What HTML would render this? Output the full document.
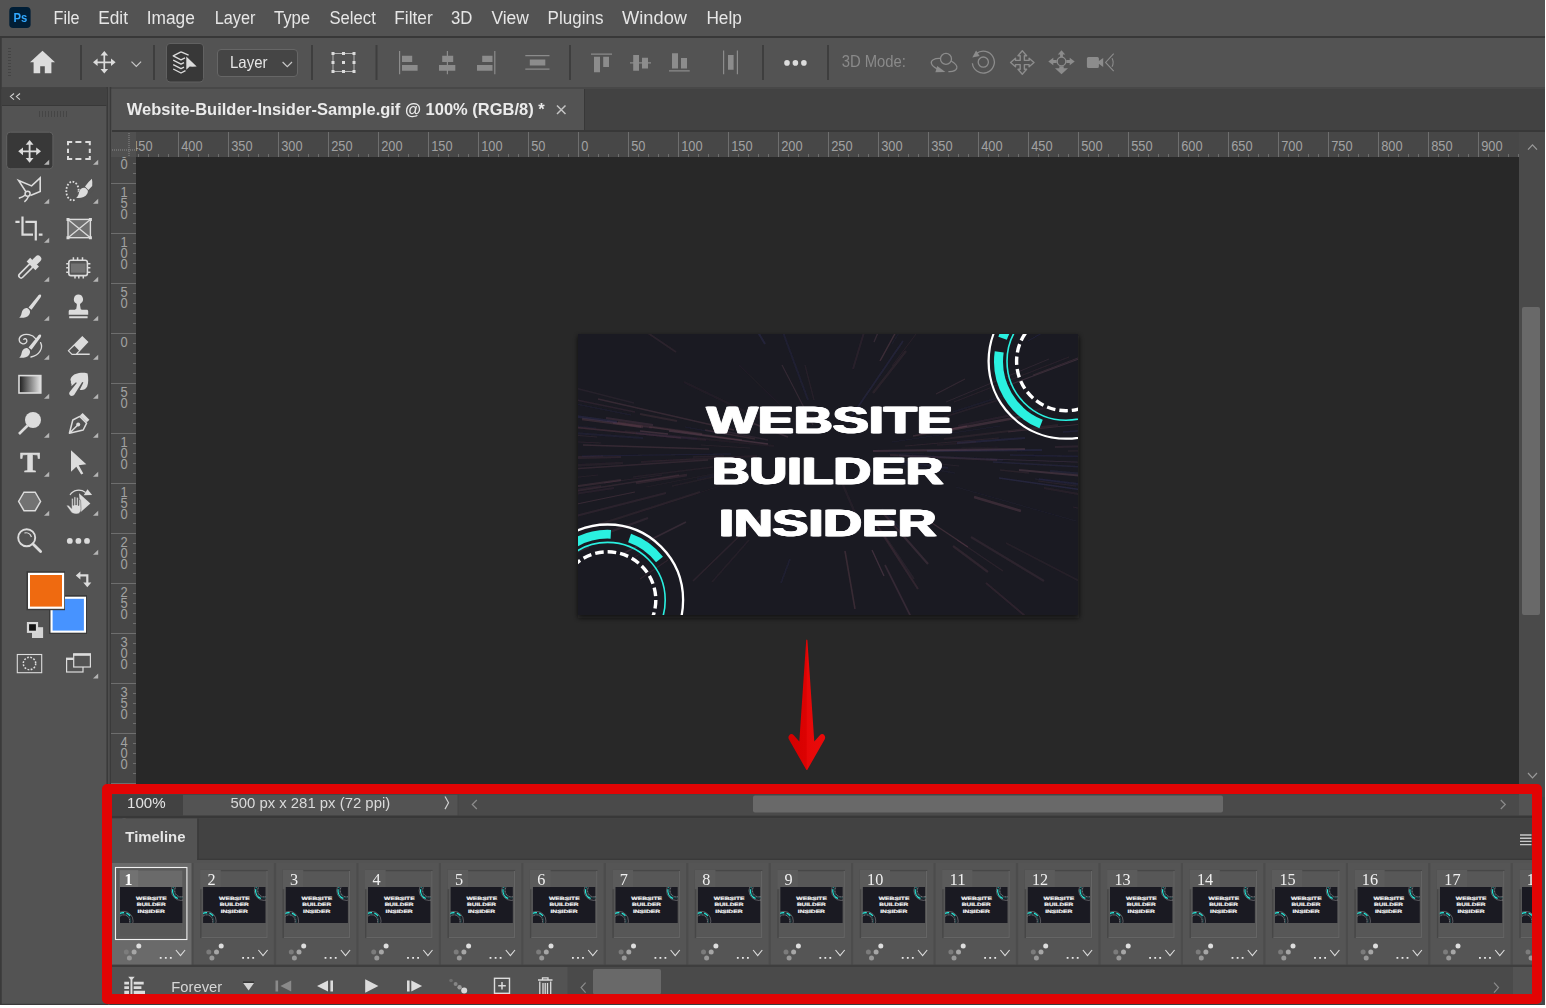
<!DOCTYPE html>
<html lang="en">
<head>
<meta charset="utf-8">
<title>Website-Builder-Insider-Sample.gif @ 100% (RGB/8) - Timeline</title>
<style>
html,body{margin:0;padding:0;background:#ffffff;}
body{width:1546px;height:1008px;overflow:hidden;position:relative;font-family:"Liberation Sans",sans-serif;}
#app{position:absolute;left:0;top:0;width:1546px;height:1008px;display:block;}
text{white-space:pre;}
</style>
</head>
<body>
<svg id="app" width="1546" height="1008" viewBox="0 0 1546 1008" font-family="Liberation Sans, sans-serif">
<g id="base">
<rect x="0" y="0" width="1545" height="1005" fill="#535353" />
<rect x="0" y="36" width="1545" height="2" fill="#383838" />
<rect x="0" y="87" width="1545" height="2" fill="#484848" />
<rect x="0" y="38" width="1.7" height="967" fill="#3a3a3a" />
<rect x="0" y="1003.8" width="1545" height="1.2" fill="#3a3a3a" />
<rect x="1542" y="797" width="3" height="208" fill="#424848" />
<rect x="112" y="89" width="1433" height="43" fill="#424242" />
<rect x="106.4" y="87" width="1.6" height="918" fill="#3a3a3a" />
<rect x="108" y="87" width="1.8" height="918" fill="#4e4e4e" />
<rect x="109.8" y="87" width="1.4" height="918" fill="#3a3a3a" />
<rect x="2" y="87.4" width="104.4" height="17.4" fill="#424242" />
<rect x="2" y="104.8" width="104.4" height="1.2" fill="#383838" />
<rect x="112" y="89" width="472" height="41" fill="#535353" />
<rect x="584" y="89" width="1" height="41" fill="#383838" />
<rect x="112" y="130" width="1433" height="2" fill="#383838" />
<rect x="136" y="157" width="1383" height="640" fill="#282828" />
<rect x="111" y="132" width="1408" height="25" fill="#474747" />
<rect x="111" y="157" width="25" height="640" fill="#474747" />
<rect x="1519" y="132" width="26" height="665" fill="#4a4a4a" />
<rect x="1522" y="307" width="18" height="308" fill="#696969" rx="2"/>
<path d="M1528 149.7l4.5-4.8 4.5 4.8" fill="none" stroke="#9a9a9a" stroke-width="1.2"/>
<path d="M1528 773l4.5 4.8 4.5-4.8" fill="none" stroke="#9a9a9a" stroke-width="1.2"/>
</g>
<g id="rulers" font-family="Liberation Sans, sans-serif">
<path d="M138.5 154v3M148.5 154v3M158.5 154v3M168.5 154v3M178.5 154v3M188.5 154v3M198.5 154v3M208.5 154v3M218.5 154v3M228.5 154v3M238.5 154v3M248.5 154v3M258.5 154v3M268.5 154v3M278.5 154v3M288.5 154v3M298.5 154v3M308.5 154v3M318.5 154v3M328.5 154v3M338.5 154v3M348.5 154v3M358.5 154v3M368.5 154v3M378.5 154v3M388.5 154v3M398.5 154v3M408.5 154v3M418.5 154v3M428.5 154v3M438.5 154v3M448.5 154v3M458.5 154v3M468.5 154v3M478.5 154v3M488.5 154v3M498.5 154v3M508.5 154v3M518.5 154v3M528.5 154v3M538.5 154v3M548.5 154v3M558.5 154v3M568.5 154v3M578.5 154v3M588.5 154v3M598.5 154v3M608.5 154v3M618.5 154v3M628.5 154v3M638.5 154v3M648.5 154v3M658.5 154v3M668.5 154v3M678.5 154v3M688.5 154v3M698.5 154v3M708.5 154v3M718.5 154v3M728.5 154v3M738.5 154v3M748.5 154v3M758.5 154v3M768.5 154v3M778.5 154v3M788.5 154v3M798.5 154v3M808.5 154v3M818.5 154v3M828.5 154v3M838.5 154v3M848.5 154v3M858.5 154v3M868.5 154v3M878.5 154v3M888.5 154v3M898.5 154v3M908.5 154v3M918.5 154v3M928.5 154v3M938.5 154v3M948.5 154v3M958.5 154v3M968.5 154v3M978.5 154v3M988.5 154v3M998.5 154v3M1008.5 154v3M1018.5 154v3M1028.5 154v3M1038.5 154v3M1048.5 154v3M1058.5 154v3M1068.5 154v3M1078.5 154v3M1088.5 154v3M1098.5 154v3M1108.5 154v3M1118.5 154v3M1128.5 154v3M1138.5 154v3M1148.5 154v3M1158.5 154v3M1168.5 154v3M1178.5 154v3M1188.5 154v3M1198.5 154v3M1208.5 154v3M1218.5 154v3M1228.5 154v3M1238.5 154v3M1248.5 154v3M1258.5 154v3M1268.5 154v3M1278.5 154v3M1288.5 154v3M1298.5 154v3M1308.5 154v3M1318.5 154v3M1328.5 154v3M1338.5 154v3M1348.5 154v3M1358.5 154v3M1368.5 154v3M1378.5 154v3M1388.5 154v3M1398.5 154v3M1408.5 154v3M1418.5 154v3M1428.5 154v3M1438.5 154v3M1448.5 154v3M1458.5 154v3M1468.5 154v3M1478.5 154v3M1488.5 154v3M1498.5 154v3M1508.5 154v3M1518.5 154v3M133 163.5h3M133 173.5h3M133 183.5h3M133 193.5h3M133 203.5h3M133 213.5h3M133 223.5h3M133 233.5h3M133 243.5h3M133 253.5h3M133 263.5h3M133 273.5h3M133 283.5h3M133 293.5h3M133 303.5h3M133 313.5h3M133 323.5h3M133 333.5h3M133 343.5h3M133 353.5h3M133 363.5h3M133 373.5h3M133 383.5h3M133 393.5h3M133 403.5h3M133 413.5h3M133 423.5h3M133 433.5h3M133 443.5h3M133 453.5h3M133 463.5h3M133 473.5h3M133 483.5h3M133 493.5h3M133 503.5h3M133 513.5h3M133 523.5h3M133 533.5h3M133 543.5h3M133 553.5h3M133 563.5h3M133 573.5h3M133 583.5h3M133 593.5h3M133 603.5h3M133 613.5h3M133 623.5h3M133 633.5h3M133 643.5h3M133 653.5h3M133 663.5h3M133 673.5h3M133 683.5h3M133 693.5h3M133 703.5h3M133 713.5h3M133 723.5h3M133 733.5h3M133 743.5h3M133 753.5h3M133 763.5h3M133 773.5h3M133 783.5h3M133 793.5h3" stroke="#6e6e6e" stroke-width="1" fill="none"/>
<text x="131.2" y="151.4" font-size="14.7" fill="#a2a2a2" textLength="21.4" lengthAdjust="spacingAndGlyphs" >450</text>
<text x="181.2" y="151.4" font-size="14.7" fill="#a2a2a2" textLength="21.4" lengthAdjust="spacingAndGlyphs" >400</text>
<text x="231.2" y="151.4" font-size="14.7" fill="#a2a2a2" textLength="21.4" lengthAdjust="spacingAndGlyphs" >350</text>
<text x="281.2" y="151.4" font-size="14.7" fill="#a2a2a2" textLength="21.4" lengthAdjust="spacingAndGlyphs" >300</text>
<text x="331.2" y="151.4" font-size="14.7" fill="#a2a2a2" textLength="21.4" lengthAdjust="spacingAndGlyphs" >250</text>
<text x="381.2" y="151.4" font-size="14.7" fill="#a2a2a2" textLength="21.4" lengthAdjust="spacingAndGlyphs" >200</text>
<text x="431.2" y="151.4" font-size="14.7" fill="#a2a2a2" textLength="21.4" lengthAdjust="spacingAndGlyphs" >150</text>
<text x="481.2" y="151.4" font-size="14.7" fill="#a2a2a2" textLength="21.4" lengthAdjust="spacingAndGlyphs" >100</text>
<text x="531.2" y="151.4" font-size="14.7" fill="#a2a2a2" textLength="14.3" lengthAdjust="spacingAndGlyphs" >50</text>
<text x="581.2" y="151.4" font-size="14.7" fill="#a2a2a2" textLength="7.1" lengthAdjust="spacingAndGlyphs" >0</text>
<text x="631.2" y="151.4" font-size="14.7" fill="#a2a2a2" textLength="14.3" lengthAdjust="spacingAndGlyphs" >50</text>
<text x="681.2" y="151.4" font-size="14.7" fill="#a2a2a2" textLength="21.5" lengthAdjust="spacingAndGlyphs" >100</text>
<text x="731.2" y="151.4" font-size="14.7" fill="#a2a2a2" textLength="21.5" lengthAdjust="spacingAndGlyphs" >150</text>
<text x="781.2" y="151.4" font-size="14.7" fill="#a2a2a2" textLength="21.5" lengthAdjust="spacingAndGlyphs" >200</text>
<text x="831.2" y="151.4" font-size="14.7" fill="#a2a2a2" textLength="21.5" lengthAdjust="spacingAndGlyphs" >250</text>
<text x="881.2" y="151.4" font-size="14.7" fill="#a2a2a2" textLength="21.5" lengthAdjust="spacingAndGlyphs" >300</text>
<text x="931.2" y="151.4" font-size="14.7" fill="#a2a2a2" textLength="21.5" lengthAdjust="spacingAndGlyphs" >350</text>
<text x="981.2" y="151.4" font-size="14.7" fill="#a2a2a2" textLength="21.5" lengthAdjust="spacingAndGlyphs" >400</text>
<text x="1031.2" y="151.4" font-size="14.7" fill="#a2a2a2" textLength="21.5" lengthAdjust="spacingAndGlyphs" >450</text>
<text x="1081.2" y="151.4" font-size="14.7" fill="#a2a2a2" textLength="21.5" lengthAdjust="spacingAndGlyphs" >500</text>
<text x="1131.2" y="151.4" font-size="14.7" fill="#a2a2a2" textLength="21.5" lengthAdjust="spacingAndGlyphs" >550</text>
<text x="1181.2" y="151.4" font-size="14.7" fill="#a2a2a2" textLength="21.5" lengthAdjust="spacingAndGlyphs" >600</text>
<text x="1231.2" y="151.4" font-size="14.7" fill="#a2a2a2" textLength="21.5" lengthAdjust="spacingAndGlyphs" >650</text>
<text x="1281.2" y="151.4" font-size="14.7" fill="#a2a2a2" textLength="21.5" lengthAdjust="spacingAndGlyphs" >700</text>
<text x="1331.2" y="151.4" font-size="14.7" fill="#a2a2a2" textLength="21.5" lengthAdjust="spacingAndGlyphs" >750</text>
<text x="1381.2" y="151.4" font-size="14.7" fill="#a2a2a2" textLength="21.5" lengthAdjust="spacingAndGlyphs" >800</text>
<text x="1431.2" y="151.4" font-size="14.7" fill="#a2a2a2" textLength="21.5" lengthAdjust="spacingAndGlyphs" >850</text>
<text x="1481.2" y="151.4" font-size="14.7" fill="#a2a2a2" textLength="21.5" lengthAdjust="spacingAndGlyphs" >900</text>
<text x="120.5" y="147.2" font-size="14.7" fill="#a2a2a2" textLength="7.2" lengthAdjust="spacingAndGlyphs" >2</text>
<text x="120.5" y="158.2" font-size="14.7" fill="#a2a2a2" textLength="7.2" lengthAdjust="spacingAndGlyphs" >0</text>
<text x="120.5" y="169.2" font-size="14.7" fill="#a2a2a2" textLength="7.2" lengthAdjust="spacingAndGlyphs" >0</text>
<text x="120.5" y="197.2" font-size="14.7" fill="#a2a2a2" textLength="7.2" lengthAdjust="spacingAndGlyphs" >1</text>
<text x="120.5" y="208.2" font-size="14.7" fill="#a2a2a2" textLength="7.2" lengthAdjust="spacingAndGlyphs" >5</text>
<text x="120.5" y="219.2" font-size="14.7" fill="#a2a2a2" textLength="7.2" lengthAdjust="spacingAndGlyphs" >0</text>
<text x="120.5" y="247.2" font-size="14.7" fill="#a2a2a2" textLength="7.2" lengthAdjust="spacingAndGlyphs" >1</text>
<text x="120.5" y="258.2" font-size="14.7" fill="#a2a2a2" textLength="7.2" lengthAdjust="spacingAndGlyphs" >0</text>
<text x="120.5" y="269.2" font-size="14.7" fill="#a2a2a2" textLength="7.2" lengthAdjust="spacingAndGlyphs" >0</text>
<text x="120.5" y="297.2" font-size="14.7" fill="#a2a2a2" textLength="7.2" lengthAdjust="spacingAndGlyphs" >5</text>
<text x="120.5" y="308.2" font-size="14.7" fill="#a2a2a2" textLength="7.2" lengthAdjust="spacingAndGlyphs" >0</text>
<text x="120.5" y="347.2" font-size="14.7" fill="#a2a2a2" textLength="7.2" lengthAdjust="spacingAndGlyphs" >0</text>
<text x="120.5" y="397.2" font-size="14.7" fill="#a2a2a2" textLength="7.2" lengthAdjust="spacingAndGlyphs" >5</text>
<text x="120.5" y="408.2" font-size="14.7" fill="#a2a2a2" textLength="7.2" lengthAdjust="spacingAndGlyphs" >0</text>
<text x="120.5" y="447.2" font-size="14.7" fill="#a2a2a2" textLength="7.2" lengthAdjust="spacingAndGlyphs" >1</text>
<text x="120.5" y="458.2" font-size="14.7" fill="#a2a2a2" textLength="7.2" lengthAdjust="spacingAndGlyphs" >0</text>
<text x="120.5" y="469.2" font-size="14.7" fill="#a2a2a2" textLength="7.2" lengthAdjust="spacingAndGlyphs" >0</text>
<text x="120.5" y="497.2" font-size="14.7" fill="#a2a2a2" textLength="7.2" lengthAdjust="spacingAndGlyphs" >1</text>
<text x="120.5" y="508.2" font-size="14.7" fill="#a2a2a2" textLength="7.2" lengthAdjust="spacingAndGlyphs" >5</text>
<text x="120.5" y="519.2" font-size="14.7" fill="#a2a2a2" textLength="7.2" lengthAdjust="spacingAndGlyphs" >0</text>
<text x="120.5" y="547.2" font-size="14.7" fill="#a2a2a2" textLength="7.2" lengthAdjust="spacingAndGlyphs" >2</text>
<text x="120.5" y="558.2" font-size="14.7" fill="#a2a2a2" textLength="7.2" lengthAdjust="spacingAndGlyphs" >0</text>
<text x="120.5" y="569.2" font-size="14.7" fill="#a2a2a2" textLength="7.2" lengthAdjust="spacingAndGlyphs" >0</text>
<text x="120.5" y="597.2" font-size="14.7" fill="#a2a2a2" textLength="7.2" lengthAdjust="spacingAndGlyphs" >2</text>
<text x="120.5" y="608.2" font-size="14.7" fill="#a2a2a2" textLength="7.2" lengthAdjust="spacingAndGlyphs" >5</text>
<text x="120.5" y="619.2" font-size="14.7" fill="#a2a2a2" textLength="7.2" lengthAdjust="spacingAndGlyphs" >0</text>
<text x="120.5" y="647.2" font-size="14.7" fill="#a2a2a2" textLength="7.2" lengthAdjust="spacingAndGlyphs" >3</text>
<text x="120.5" y="658.2" font-size="14.7" fill="#a2a2a2" textLength="7.2" lengthAdjust="spacingAndGlyphs" >0</text>
<text x="120.5" y="669.2" font-size="14.7" fill="#a2a2a2" textLength="7.2" lengthAdjust="spacingAndGlyphs" >0</text>
<text x="120.5" y="697.2" font-size="14.7" fill="#a2a2a2" textLength="7.2" lengthAdjust="spacingAndGlyphs" >3</text>
<text x="120.5" y="708.2" font-size="14.7" fill="#a2a2a2" textLength="7.2" lengthAdjust="spacingAndGlyphs" >5</text>
<text x="120.5" y="719.2" font-size="14.7" fill="#a2a2a2" textLength="7.2" lengthAdjust="spacingAndGlyphs" >0</text>
<text x="120.5" y="747.2" font-size="14.7" fill="#a2a2a2" textLength="7.2" lengthAdjust="spacingAndGlyphs" >4</text>
<text x="120.5" y="758.2" font-size="14.7" fill="#a2a2a2" textLength="7.2" lengthAdjust="spacingAndGlyphs" >0</text>
<text x="120.5" y="769.2" font-size="14.7" fill="#a2a2a2" textLength="7.2" lengthAdjust="spacingAndGlyphs" >0</text>
<text x="120.5" y="797.2" font-size="14.7" fill="#a2a2a2" textLength="7.2" lengthAdjust="spacingAndGlyphs" >4</text>
<text x="120.5" y="808.2" font-size="14.7" fill="#a2a2a2" textLength="7.2" lengthAdjust="spacingAndGlyphs" >5</text>
<text x="120.5" y="819.2" font-size="14.7" fill="#a2a2a2" textLength="7.2" lengthAdjust="spacingAndGlyphs" >0</text>
<path d="M128.5 132v25M178.5 132v25M228.5 132v25M278.5 132v25M328.5 132v25M378.5 132v25M428.5 132v25M478.5 132v25M528.5 132v25M578.5 132v25M628.5 132v25M678.5 132v25M728.5 132v25M778.5 132v25M828.5 132v25M878.5 132v25M928.5 132v25M978.5 132v25M1028.5 132v25M1078.5 132v25M1128.5 132v25M1178.5 132v25M1228.5 132v25M1278.5 132v25M1328.5 132v25M1378.5 132v25M1428.5 132v25M1478.5 132v25M111 133.5h25M111 183.5h25M111 233.5h25M111 283.5h25M111 333.5h25M111 383.5h25M111 433.5h25M111 483.5h25M111 533.5h25M111 583.5h25M111 633.5h25M111 683.5h25M111 733.5h25M111 783.5h25" stroke="#6e6e6e" stroke-width="1" fill="none"/>
<rect x="111" y="132" width="25" height="25" fill="#505050" />
<path d="M112 150h24M129 133v24" stroke="#8a8a8a" stroke-width="1" stroke-dasharray="1 1" fill="none"/>
</g>
<g id="doc">
<defs><filter id="fat" x="-5%" y="-5%" width="110%" height="110%"><feOffset dx="-1.1" dy="0" in="SourceGraphic" result="a"/><feOffset dx="1.1" dy="0" in="SourceGraphic" result="b"/><feMerge><feMergeNode in="a"/><feMergeNode in="b"/><feMergeNode in="SourceGraphic"/></feMerge></filter><filter id="sb"><feGaussianBlur stdDeviation="0.7"/></filter><filter id="shb" x="-10%" y="-10%" width="120%" height="120%"><feGaussianBlur stdDeviation="2.5"/></filter></defs>
<rect x="578" y="336" width="501" height="282" fill="#101010" opacity="0.75" filter="url(#shb)"/>
<svg x="578" y="334" width="500" height="281" viewBox="0 0 500 281"><rect x="0" y="0" width="500" height="281" fill="#1a1a22" /><g filter="url(#sb)"><line x1="-8" y1="165" x2="-89" y2="180" stroke="#4a3040" stroke-width="1.1" opacity="0.34"/><line x1="314" y1="10" x2="331" y2="-17" stroke="#3a3a6a" stroke-width="0.9" opacity="0.20"/><line x1="269" y1="89" x2="325" y2="7" stroke="#3a3a6a" stroke-width="1.8" opacity="0.29"/><line x1="335" y1="102" x2="389" y2="92" stroke="#7a4f5f" stroke-width="1.3" opacity="0.32"/><line x1="415" y1="128" x2="524" y2="134" stroke="#3a3a6a" stroke-width="1.5" opacity="0.29"/><line x1="190" y1="106" x2="135" y2="95" stroke="#80566a" stroke-width="1.3" opacity="0.18"/><line x1="378" y1="153" x2="498" y2="187" stroke="#3a3a6a" stroke-width="0.8" opacity="0.14"/><line x1="534" y1="114" x2="610" y2="114" stroke="#7a4f5f" stroke-width="1.1" opacity="0.27"/><line x1="-28" y1="137" x2="-150" y2="146" stroke="#7a4f5f" stroke-width="1.9" opacity="0.15"/><line x1="412" y1="125" x2="524" y2="129" stroke="#6b4553" stroke-width="1.1" opacity="0.24"/><line x1="109" y1="141" x2="58" y2="149" stroke="#5a3a48" stroke-width="2.4" opacity="0.34"/><line x1="210" y1="103" x2="169" y2="87" stroke="#80566a" stroke-width="1.7" opacity="0.28"/><line x1="20" y1="141" x2="-46" y2="148" stroke="#5a3a48" stroke-width="0.9" opacity="0.22"/><line x1="262" y1="144" x2="280" y2="186" stroke="#4a3040" stroke-width="2.3" opacity="0.24"/><line x1="-5" y1="133" x2="-53" y2="136" stroke="#6b4553" stroke-width="1.2" opacity="0.20"/><line x1="187" y1="87" x2="106" y2="48" stroke="#4a3040" stroke-width="2.3" opacity="0.17"/><line x1="358" y1="60" x2="387" y2="45" stroke="#7a4f5f" stroke-width="1.2" opacity="0.25"/><line x1="65" y1="93" x2="4" y2="85" stroke="#6b4553" stroke-width="2.4" opacity="0.36"/><line x1="393" y1="203" x2="466" y2="247" stroke="#7a4f5f" stroke-width="2.3" opacity="0.19"/><line x1="146" y1="122" x2="115" y2="123" stroke="#5a3a48" stroke-width="1.7" opacity="0.22"/><line x1="57" y1="78" x2="-50" y2="56" stroke="#4a3040" stroke-width="1.7" opacity="0.37"/><line x1="366" y1="83" x2="424" y2="65" stroke="#7a4f5f" stroke-width="1.8" opacity="0.13"/><line x1="130" y1="126" x2="-22" y2="136" stroke="#7a4f5f" stroke-width="1.4" opacity="0.24"/><line x1="466" y1="154" x2="506" y2="161" stroke="#5a3a48" stroke-width="1.9" opacity="0.21"/><line x1="368" y1="68" x2="471" y2="25" stroke="#80566a" stroke-width="0.8" opacity="0.25"/><line x1="312" y1="121" x2="419" y2="126" stroke="#5a3a48" stroke-width="2.0" opacity="0.35"/><line x1="108" y1="188" x2="46" y2="219" stroke="#80566a" stroke-width="1.6" opacity="0.26"/><line x1="349" y1="117" x2="464" y2="116" stroke="#3a3a6a" stroke-width="1.9" opacity="0.32"/><line x1="117" y1="125" x2="74" y2="127" stroke="#4a3040" stroke-width="1.1" opacity="0.17"/><line x1="376" y1="68" x2="491" y2="23" stroke="#5a3a48" stroke-width="1.2" opacity="0.23"/><line x1="98" y1="18" x2="64" y2="-5" stroke="#6b4553" stroke-width="1.7" opacity="0.22"/><line x1="-12" y1="134" x2="-42" y2="136" stroke="#7a4f5f" stroke-width="1.2" opacity="0.37"/><line x1="304" y1="175" x2="329" y2="202" stroke="#3a3a6a" stroke-width="1.6" opacity="0.22"/><line x1="133" y1="-12" x2="83" y2="-66" stroke="#5a3a48" stroke-width="0.9" opacity="0.14"/><line x1="131" y1="115" x2="5" y2="111" stroke="#7a4f5f" stroke-width="1.4" opacity="0.29"/><line x1="290" y1="177" x2="336" y2="245" stroke="#80566a" stroke-width="1.8" opacity="0.13"/><line x1="57" y1="158" x2="-64" y2="183" stroke="#7a4f5f" stroke-width="1.1" opacity="0.30"/><line x1="422" y1="136" x2="451" y2="139" stroke="#6b4553" stroke-width="1.4" opacity="0.19"/><line x1="187" y1="10" x2="147" y2="-58" stroke="#3a3a6a" stroke-width="1.9" opacity="0.34"/><line x1="101" y1="141" x2="-1" y2="157" stroke="#7a4f5f" stroke-width="1.7" opacity="0.22"/><line x1="450" y1="7" x2="511" y2="-28" stroke="#2e2e5c" stroke-width="1.0" opacity="0.38"/><line x1="430" y1="-1" x2="458" y2="-19" stroke="#6b4553" stroke-width="2.4" opacity="0.35"/><line x1="485" y1="98" x2="551" y2="93" stroke="#2e2e5c" stroke-width="1.4" opacity="0.34"/><line x1="90" y1="100" x2="62" y2="97" stroke="#80566a" stroke-width="1.5" opacity="0.35"/><line x1="457" y1="145" x2="595" y2="164" stroke="#3a3a6a" stroke-width="1.6" opacity="0.16"/><line x1="215" y1="-5" x2="191" y2="-90" stroke="#3a3a6a" stroke-width="1.9" opacity="0.27"/><line x1="74" y1="94" x2="29" y2="87" stroke="#4a3040" stroke-width="1.7" opacity="0.34"/><line x1="327" y1="112" x2="421" y2="104" stroke="#5a3a48" stroke-width="1.1" opacity="0.27"/><line x1="63" y1="93" x2="35" y2="89" stroke="#7a4f5f" stroke-width="1.4" opacity="0.25"/><line x1="302" y1="27" x2="337" y2="-37" stroke="#7a4f5f" stroke-width="1.5" opacity="0.36"/><line x1="375" y1="78" x2="425" y2="62" stroke="#3a3a6a" stroke-width="1.5" opacity="0.15"/><line x1="314" y1="32" x2="341" y2="-4" stroke="#6b4553" stroke-width="0.8" opacity="0.23"/><line x1="232" y1="284" x2="230" y2="302" stroke="#6b4553" stroke-width="1.9" opacity="0.18"/><line x1="36" y1="154" x2="-4" y2="160" stroke="#4a3040" stroke-width="1.9" opacity="0.28"/><line x1="235" y1="91" x2="204" y2="31" stroke="#80566a" stroke-width="1.1" opacity="0.26"/><line x1="307" y1="231" x2="333" y2="283" stroke="#80566a" stroke-width="1.7" opacity="0.26"/><line x1="379" y1="206" x2="425" y2="237" stroke="#6b4553" stroke-width="1.3" opacity="0.20"/><line x1="323" y1="130" x2="377" y2="139" stroke="#2e2e5c" stroke-width="1.4" opacity="0.14"/><line x1="88" y1="159" x2="-18" y2="186" stroke="#6b4553" stroke-width="1.9" opacity="0.22"/><line x1="-20" y1="71" x2="-58" y2="64" stroke="#4a3040" stroke-width="1.3" opacity="0.29"/><line x1="490" y1="117" x2="577" y2="116" stroke="#7a4f5f" stroke-width="1.7" opacity="0.13"/><line x1="172" y1="114" x2="123" y2="111" stroke="#6b4553" stroke-width="1.1" opacity="0.16"/><line x1="212" y1="225" x2="203" y2="249" stroke="#2e2e5c" stroke-width="2.0" opacity="0.24"/><line x1="171" y1="206" x2="134" y2="248" stroke="#4a3040" stroke-width="1.8" opacity="0.22"/><line x1="25" y1="122" x2="-52" y2="124" stroke="#6b4553" stroke-width="1.0" opacity="0.28"/><line x1="461" y1="145" x2="594" y2="161" stroke="#2e2e5c" stroke-width="1.7" opacity="0.36"/><line x1="296" y1="187" x2="340" y2="255" stroke="#5a3a48" stroke-width="2.0" opacity="0.36"/><line x1="275" y1="35" x2="299" y2="-45" stroke="#4a3040" stroke-width="2.0" opacity="0.30"/><line x1="371" y1="96" x2="453" y2="81" stroke="#7a4f5f" stroke-width="2.4" opacity="0.35"/><line x1="53" y1="81" x2="-12" y2="68" stroke="#2e2e5c" stroke-width="1.1" opacity="0.23"/><line x1="396" y1="163" x2="443" y2="177" stroke="#7a4f5f" stroke-width="2.4" opacity="0.32"/><line x1="472" y1="137" x2="530" y2="142" stroke="#3a3a6a" stroke-width="2.0" opacity="0.25"/><line x1="-12" y1="145" x2="-106" y2="155" stroke="#4a3040" stroke-width="1.6" opacity="0.23"/><line x1="190" y1="110" x2="91" y2="97" stroke="#80566a" stroke-width="1.4" opacity="0.37"/><line x1="421" y1="144" x2="519" y2="158" stroke="#3a3a6a" stroke-width="1.5" opacity="0.37"/><line x1="119" y1="105" x2="58" y2="99" stroke="#2e2e5c" stroke-width="2.3" opacity="0.19"/><line x1="225" y1="93" x2="161" y2="31" stroke="#4a3040" stroke-width="1.1" opacity="0.13"/><line x1="196" y1="112" x2="47" y2="97" stroke="#5a3a48" stroke-width="2.2" opacity="0.14"/><line x1="-5" y1="189" x2="-56" y2="203" stroke="#4a3040" stroke-width="2.1" opacity="0.15"/><line x1="321" y1="121" x2="425" y2="126" stroke="#3a3a6a" stroke-width="2.2" opacity="0.15"/><line x1="43" y1="123" x2="-40" y2="125" stroke="#5a3a48" stroke-width="1.9" opacity="0.29"/><line x1="90" y1="226" x2="62" y2="245" stroke="#5a3a48" stroke-width="1.2" opacity="0.31"/><line x1="428" y1="209" x2="507" y2="250" stroke="#5a3a48" stroke-width="1.8" opacity="0.19"/><line x1="236" y1="66" x2="227" y2="31" stroke="#6b4553" stroke-width="1.2" opacity="0.17"/><line x1="507" y1="99" x2="537" y2="96" stroke="#7a4f5f" stroke-width="1.2" opacity="0.12"/><line x1="310" y1="119" x2="347" y2="120" stroke="#2e2e5c" stroke-width="1.2" opacity="0.16"/><line x1="379" y1="109" x2="447" y2="104" stroke="#3a3a6a" stroke-width="2.1" opacity="0.31"/><line x1="477" y1="113" x2="552" y2="111" stroke="#6b4553" stroke-width="1.8" opacity="0.22"/><line x1="383" y1="114" x2="421" y2="113" stroke="#5a3a48" stroke-width="0.9" opacity="0.14"/><line x1="56" y1="69" x2="-3" y2="54" stroke="#80566a" stroke-width="1.3" opacity="0.12"/><line x1="431" y1="51" x2="506" y2="23" stroke="#80566a" stroke-width="1.3" opacity="0.30"/><line x1="179" y1="122" x2="63" y2="128" stroke="#4a3040" stroke-width="2.2" opacity="0.27"/><line x1="153" y1="120" x2="4" y2="122" stroke="#2e2e5c" stroke-width="1.2" opacity="0.35"/><line x1="65" y1="104" x2="-61" y2="95" stroke="#2e2e5c" stroke-width="2.1" opacity="0.27"/><line x1="75" y1="91" x2="28" y2="84" stroke="#80566a" stroke-width="2.2" opacity="0.24"/><line x1="432" y1="121" x2="581" y2="124" stroke="#2e2e5c" stroke-width="1.5" opacity="0.34"/><line x1="359" y1="111" x2="398" y2="108" stroke="#5a3a48" stroke-width="1.8" opacity="0.14"/><line x1="375" y1="212" x2="410" y2="238" stroke="#6b4553" stroke-width="2.3" opacity="0.25"/><line x1="182" y1="182" x2="115" y2="247" stroke="#5a3a48" stroke-width="1.6" opacity="0.29"/><line x1="39" y1="88" x2="-99" y2="69" stroke="#3a3a6a" stroke-width="2.4" opacity="0.32"/><line x1="-4" y1="82" x2="-148" y2="62" stroke="#2e2e5c" stroke-width="1.4" opacity="0.13"/><line x1="151" y1="101" x2="107" y2="93" stroke="#2e2e5c" stroke-width="1.1" opacity="0.22"/><line x1="-8" y1="142" x2="-92" y2="150" stroke="#2e2e5c" stroke-width="1.8" opacity="0.15"/><line x1="296" y1="123" x2="381" y2="132" stroke="#80566a" stroke-width="1.0" opacity="0.13"/><line x1="408" y1="125" x2="499" y2="128" stroke="#3a3a6a" stroke-width="1.2" opacity="0.17"/><line x1="306" y1="180" x2="350" y2="230" stroke="#80566a" stroke-width="2.2" opacity="0.26"/><line x1="19" y1="103" x2="-18" y2="100" stroke="#80566a" stroke-width="0.9" opacity="0.18"/><line x1="380" y1="92" x2="468" y2="74" stroke="#4a3040" stroke-width="2.1" opacity="0.32"/><line x1="495" y1="173" x2="623" y2="202" stroke="#5a3a48" stroke-width="1.2" opacity="0.24"/><line x1="122" y1="158" x2="13" y2="193" stroke="#6b4553" stroke-width="2.2" opacity="0.19"/><line x1="-36" y1="101" x2="-95" y2="97" stroke="#4a3040" stroke-width="1.7" opacity="0.13"/><line x1="311" y1="126" x2="370" y2="134" stroke="#2e2e5c" stroke-width="2.2" opacity="0.26"/><line x1="166" y1="135" x2="119" y2="145" stroke="#2e2e5c" stroke-width="2.1" opacity="0.14"/><line x1="294" y1="216" x2="306" y2="242" stroke="#80566a" stroke-width="1.3" opacity="0.37"/><line x1="11" y1="213" x2="-81" y2="249" stroke="#7a4f5f" stroke-width="1.9" opacity="0.21"/><line x1="18" y1="94" x2="-23" y2="90" stroke="#3a3a6a" stroke-width="1.4" opacity="0.12"/><line x1="295" y1="117" x2="447" y2="115" stroke="#80566a" stroke-width="2.2" opacity="0.31"/><line x1="408" y1="249" x2="478" y2="308" stroke="#5a3a48" stroke-width="1.7" opacity="0.32"/><line x1="128" y1="106" x2="-16" y2="92" stroke="#4a3040" stroke-width="1.8" opacity="0.24"/><line x1="314" y1="108" x2="422" y2="92" stroke="#2e2e5c" stroke-width="1.1" opacity="0.17"/><line x1="460" y1="147" x2="498" y2="152" stroke="#7a4f5f" stroke-width="1.0" opacity="0.16"/><line x1="177" y1="105" x2="127" y2="96" stroke="#6b4553" stroke-width="1.4" opacity="0.33"/><line x1="441" y1="136" x2="506" y2="142" stroke="#80566a" stroke-width="1.9" opacity="0.33"/><line x1="135" y1="133" x2="55" y2="143" stroke="#4a3040" stroke-width="1.6" opacity="0.22"/><line x1="296" y1="8" x2="307" y2="-18" stroke="#80566a" stroke-width="1.3" opacity="0.26"/><line x1="267" y1="217" x2="277" y2="275" stroke="#6b4553" stroke-width="1.6" opacity="0.38"/><line x1="230" y1="66" x2="199" y2="-18" stroke="#2e2e5c" stroke-width="2.0" opacity="0.29"/><line x1="345" y1="183" x2="390" y2="213" stroke="#7a4f5f" stroke-width="1.4" opacity="0.36"/><line x1="430" y1="98" x2="523" y2="88" stroke="#7a4f5f" stroke-width="1.2" opacity="0.27"/><line x1="455" y1="41" x2="542" y2="8" stroke="#7a4f5f" stroke-width="0.8" opacity="0.36"/><line x1="164" y1="106" x2="71" y2="93" stroke="#7a4f5f" stroke-width="1.4" opacity="0.24"/><line x1="309" y1="-48" x2="318" y2="-73" stroke="#80566a" stroke-width="2.0" opacity="0.29"/><line x1="73" y1="214" x2="53" y2="225" stroke="#6b4553" stroke-width="0.9" opacity="0.23"/><line x1="84" y1="141" x2="26" y2="149" stroke="#4a3040" stroke-width="0.9" opacity="0.36"/><line x1="300" y1="-18" x2="316" y2="-62" stroke="#3a3a6a" stroke-width="1.6" opacity="0.28"/><line x1="70" y1="184" x2="-34" y2="222" stroke="#80566a" stroke-width="2.2" opacity="0.19"/><line x1="43" y1="146" x2="-84" y2="164" stroke="#7a4f5f" stroke-width="2.2" opacity="0.27"/><line x1="103" y1="104" x2="-36" y2="90" stroke="#5a3a48" stroke-width="1.3" opacity="0.36"/><line x1="23" y1="109" x2="-42" y2="106" stroke="#4a3040" stroke-width="1.2" opacity="0.35"/><line x1="99" y1="87" x2="62" y2="80" stroke="#6b4553" stroke-width="1.9" opacity="0.26"/><line x1="519" y1="56" x2="629" y2="30" stroke="#80566a" stroke-width="2.2" opacity="0.29"/><line x1="164" y1="145" x2="58" y2="179" stroke="#4a3040" stroke-width="0.9" opacity="0.15"/><line x1="154" y1="139" x2="94" y2="152" stroke="#5a3a48" stroke-width="1.5" opacity="0.16"/><line x1="176" y1="132" x2="68" y2="153" stroke="#6b4553" stroke-width="0.8" opacity="0.13"/><line x1="23" y1="152" x2="-97" y2="170" stroke="#6b4553" stroke-width="2.2" opacity="0.17"/><line x1="124" y1="100" x2="40" y2="88" stroke="#6b4553" stroke-width="1.9" opacity="0.29"/><line x1="156" y1="96" x2="20" y2="65" stroke="#7a4f5f" stroke-width="1.3" opacity="0.29"/><line x1="295" y1="59" x2="328" y2="17" stroke="#6b4553" stroke-width="2.3" opacity="0.21"/><line x1="366" y1="105" x2="480" y2="91" stroke="#6b4553" stroke-width="2.0" opacity="0.19"/><line x1="45" y1="129" x2="-93" y2="136" stroke="#4a3040" stroke-width="2.4" opacity="0.25"/></g><circle cx="488" cy="27.3" r="77.4" fill="none" stroke="#fff" stroke-width="2.3"/><circle cx="488" cy="27.3" r="59.0" fill="none" stroke="#2af0e0" stroke-width="1.6"/><circle cx="488" cy="27.3" r="49.4" fill="none" stroke="#fff" stroke-width="3.4" stroke-dasharray="8.6 4"/><path d="M463.1 90.0A67.4 67.4 0 0 1 421.2 17.9" fill="none" stroke="#2af0e0" stroke-width="9.0"/><path d="M424.6 4.2A67.4 67.4 0 0 1 478.6 -39.5" fill="none" stroke="#2af0e0" stroke-width="9.0"/><circle cx="29.6" cy="266" r="75.5" fill="none" stroke="#fff" stroke-width="2.3"/><circle cx="29.6" cy="266" r="57.6" fill="none" stroke="#2af0e0" stroke-width="1.6"/><circle cx="29.6" cy="266" r="48.2" fill="none" stroke="#fff" stroke-width="3.4" stroke-dasharray="8.6 4"/><path d="M-32.2 243.5A65.8 65.8 0 0 1 32.8 200.3" fill="none" stroke="#2af0e0" stroke-width="8.8"/><path d="M51.6 204.0A65.8 65.8 0 0 1 81.5 225.5" fill="none" stroke="#2af0e0" stroke-width="8.8"/><text x="128.8" y="98.5" textLength="246" lengthAdjust="spacingAndGlyphs" font-family="Liberation Sans, sans-serif" font-weight="bold" font-size="36.2" fill="#fff" stroke="#fff" stroke-width="0.6" stroke-linejoin="round" filter="url(#fat)">WEBSITE</text><text x="134" y="150.1" textLength="231.5" lengthAdjust="spacingAndGlyphs" font-family="Liberation Sans, sans-serif" font-weight="bold" font-size="36.2" fill="#fff" stroke="#fff" stroke-width="0.6" stroke-linejoin="round" filter="url(#fat)">BUILDER</text><text x="141" y="201.5" textLength="217.5" lengthAdjust="spacingAndGlyphs" font-family="Liberation Sans, sans-serif" font-weight="bold" font-size="36.2" fill="#fff" stroke="#fff" stroke-width="0.6" stroke-linejoin="round" filter="url(#fat)">INSIDER</text></svg>
</g>
<g id="arrow">
<defs><linearGradient id="ar" x1="0" x2="1" y1="0" y2="0"><stop offset="0" stop-color="#d40000"/><stop offset="0.48" stop-color="#dc0202"/><stop offset="0.52" stop-color="#e60808"/><stop offset="1" stop-color="#ea0a0a"/></linearGradient></defs>
<path d="M806.2 640.2 Q806.8 638.8 807.4 640.2 L814.3 741.6 L819.6 735.4 Q822.4 732.8 824.5 735.4 Q825.8 737.4 824.6 739.5 L807.5 769.4 Q806.8 770.5 806.1 769.4 L789 739.5 Q787.8 737.4 789.1 735.4 Q791.2 732.8 794 735.4 L799.3 741.6 Z" fill="url(#ar)"/>
</g>
<g id="menubar" font-family="Liberation Sans, sans-serif">
<rect x="9.3" y="7.1" width="21.3" height="20.9" fill="#001e36" rx="3.8"/>
<text x="13.6" y="21.8" font-size="12.4" fill="#31a8ff" font-weight="bold" textLength="13.8" lengthAdjust="spacingAndGlyphs" >Ps</text>
<text x="53.5" y="23.8" font-size="18.3" fill="#e6e6e6" textLength="26.1" lengthAdjust="spacingAndGlyphs" >File</text>
<text x="98.2" y="23.8" font-size="18.3" fill="#e6e6e6" textLength="29.8" lengthAdjust="spacingAndGlyphs" >Edit</text>
<text x="146.7" y="23.8" font-size="18.3" fill="#e6e6e6" textLength="48.2" lengthAdjust="spacingAndGlyphs" >Image</text>
<text x="214.7" y="23.8" font-size="18.3" fill="#e6e6e6" textLength="40.7" lengthAdjust="spacingAndGlyphs" >Layer</text>
<text x="274.0" y="23.8" font-size="18.3" fill="#e6e6e6" textLength="36.1" lengthAdjust="spacingAndGlyphs" >Type</text>
<text x="329.5" y="23.8" font-size="18.3" fill="#e6e6e6" textLength="46.3" lengthAdjust="spacingAndGlyphs" >Select</text>
<text x="394.3" y="23.8" font-size="18.3" fill="#e6e6e6" textLength="38.4" lengthAdjust="spacingAndGlyphs" >Filter</text>
<text x="450.9" y="23.8" font-size="18.3" fill="#e6e6e6" textLength="21.4" lengthAdjust="spacingAndGlyphs" >3D</text>
<text x="491.4" y="23.8" font-size="18.3" fill="#e6e6e6" textLength="37.5" lengthAdjust="spacingAndGlyphs" >View</text>
<text x="547.6" y="23.8" font-size="18.3" fill="#e6e6e6" textLength="55.8" lengthAdjust="spacingAndGlyphs" >Plugins</text>
<text x="622.1" y="23.8" font-size="18.3" fill="#e6e6e6" textLength="64.9" lengthAdjust="spacingAndGlyphs" >Window</text>
<text x="706.4" y="23.8" font-size="18.3" fill="#e6e6e6" textLength="35.4" lengthAdjust="spacingAndGlyphs" >Help</text>
</g>
<g id="optbar" font-family="Liberation Sans, sans-serif">
<path d="M8 48.5h3M8 51.5h3M8 54.5h3M8 57.5h3M8 60.5h3M8 63.5h3M8 66.5h3M8 69.5h3M8 72.5h3M8 75.5h3" stroke="#444" stroke-width="1"/>
<rect x="80" y="45" width="2" height="35" fill="#3e3e3e" />
<rect x="153" y="45" width="2" height="35" fill="#3e3e3e" />
<rect x="311" y="45" width="2" height="35" fill="#3e3e3e" />
<rect x="375.5" y="45" width="2" height="35" fill="#3e3e3e" />
<rect x="569" y="45" width="2" height="35" fill="#3e3e3e" />
<rect x="762" y="45" width="2" height="35" fill="#3e3e3e" />
<rect x="827" y="45" width="2" height="35" fill="#3e3e3e" />
<path d="M42.5 50.8L30 62.3h3.6v11h6.6v-7h4.6v7h6.6v-11H55z" fill="#dcdcdc"/>
<path d="M96.6 62.3H112.0M104.3 54.6V70.0" stroke="#dcdcdc" stroke-width="1.7" fill="none"/><path d="M93.0 62.3l4.6 -3.8v7.6z M115.6 62.3l-4.6 -3.8v7.6z M104.3 51.0l-3.8 4.6h7.6z M104.3 73.6l-3.8 -4.6h7.6z" fill="#dcdcdc"/>
<path d="M131.5 61.6l4.8 4.8 4.8-4.8" fill="none" stroke="#c8c8c8" stroke-width="1.2"/>
<rect x="166.5" y="43.5" width="37" height="38.5" fill="#383838" rx="3.5" stroke="#616161" stroke-width="1"/>
<g fill="none" stroke="#dcdcdc" stroke-width="1.3" stroke-linejoin="round"><path d="M181 51.8l7.6 3.4M181 51.8l-7.8 4 7.8 4 4-2"/><path d="M173.2 60.2l7.8 4 3-1.5M173.2 64.6l7.8 4 3-1.5M173.2 69l7.8 4 4.5-2.3"/></g>
<path d="M186.3 56.5v13.2l3.4-3.2 2.6 0.2 4.4-0.2z" fill="#dcdcdc"/>
<rect x="217.5" y="49.5" width="80" height="27" fill="#454545" rx="3.5" stroke="#666" stroke-width="1"/>
<text x="230.0" y="68.4" font-size="16.5" fill="#e6e6e6" textLength="37.5" lengthAdjust="spacingAndGlyphs" >Layer</text>
<path d="M282.6 62l4.7 4.7 4.7-4.7" fill="none" stroke="#c8c8c8" stroke-width="1.2"/>
<rect x="333" y="53.5" width="21" height="18" fill="none" stroke="#b4b4b4" stroke-width="1"/>
<path d="M331.5 52.0h3v3h-3zM331.5 61.0h3v3h-3zM331.5 70.0h3v3h-3zM342.0 52.0h3v3h-3zM342.0 61.0h3v3h-3zM342.0 70.0h3v3h-3zM352.5 52.0h3v3h-3zM352.5 61.0h3v3h-3zM352.5 70.0h3v3h-3z" fill="#dcdcdc"/>
<path d="M399 51H400.2V74.3H399zM402 55.7H412.2V61.9H402zM402 65H417.6V70.8H402zM446.8 51H448V74.3H446.8zM442.2 55.7H453.2V61.9H442.2zM439 65H455.3V70.8H439zM494.2 51H495.4V74.3H494.2zM482.2 55.7H492.5V61.9H482.2zM477 65H492.5V70.8H477zM525.3 55.1H549.5V56.3H525.3zM525.3 68.5H549.5V69.7H525.3zM529.8 59.4H545.3V65.6H529.8zM591 53.6H612V54.8H591zM594 56.7H600V72.2H594zM603.2 56.7H609V67H603.2zM630 62.3H651V63.5H630zM633.2 55H639V70.8H633.2zM642 57.7H648V68.5H642zM669 70.2H689.7V71.4H669zM672 53.2H678V68.5H672zM681 58H687V68.5H681zM723 50.5H724.2V74.3H723zM736.8 50.5H738V74.3H736.8zM728 55H733.6V69.7H728z" fill="#8c8c8c"/>
<circle cx="787" cy="62.9" r="2.8" fill="#dcdcdc"/><circle cx="795.4" cy="62.9" r="2.8" fill="#dcdcdc"/><circle cx="803.9" cy="62.9" r="2.8" fill="#dcdcdc"/>
<text x="841.7" y="67.2" font-size="16" fill="#8a8a8a" textLength="64.3" lengthAdjust="spacingAndGlyphs" >3D Mode:</text>
<g fill="none" stroke="#8c8c8c" stroke-width="1.3"><circle cx="946" cy="58.9" r="5.5"/><path d="M940.5 58.4C934 58 930.6 60.6 931.4 63.4C932 65.6 934.4 67.6 937.6 69.2"/><path d="M951.2 61C954.6 63 957.4 65.6 956.8 68C956 70.8 952 71.8 948.4 71.6"/><circle cx="983.3" cy="62.1" r="5.1"/><path d="M976.4 53.6a11 11 0 1 1-4 9.6"/></g>
<path d="M937.2 66l8.2 5.900-10 0.300z" fill="#8c8c8c"/>
<path d="M976.1 50.400l3.500 5.600-7.300 1.400z" fill="#8c8c8c"/>
<path d="M1022.3 50.8l4.3 4.9h-2.1999999999999997v4.699999999999999h4.699999999999999v-2.1999999999999997l4.9 4.3l-4.9 4.3v-2.1999999999999997h-4.699999999999999v4.699999999999999h2.1999999999999997l-4.3 4.9l-4.3 -4.9h2.1999999999999997v-4.699999999999999h-4.699999999999999v2.1999999999999997l-4.9 -4.3l4.9 -4.3v2.1999999999999997h4.699999999999999v-4.699999999999999h-2.1999999999999997z" fill="none" stroke="#8c8c8c" stroke-width="1.400" stroke-linejoin="round"/>
<circle cx="1061.5" cy="61.5" r="4.300" fill="none" stroke="#8c8c8c" stroke-width="1.300"/>
<path d="M1061.5 50.2l3.700 4.300h-2.300v2.600h-2.800v-2.600h-2.300z M1061.5 74.2l6.500-6h-4.300v-2h-4.400v2h-4.300z M1048.3 61.5l5-3.700v2.300h3.400v2.800h-3.400v2.300z M1074.7 61.5l-5-3.700v2.300h-3.400v2.800h3.400v2.300z" fill="#8c8c8c"/>
<path d="M1088.400 56.900h9a1.500 1.500 0 0 1 1.500 1.500v8.100a1.500 1.500 0 0 1-1.500 1.500h-9a1.500 1.500 0 0 1-1.500-1.500v-8.100a1.500 1.500 0 0 1 1.500-1.500z M1098.800 61l4.400-3.100v9l-4.400-3.100z" fill="#8c8c8c"/>
<path d="M1113.700 53.700l-8.100 8.800 8.100 8.600 M1112 58.300q2.400 4.200 0 8.400" fill="none" stroke="#8c8c8c" stroke-width="1.100"/>
</g>
<g id="tab" font-family="Liberation Sans, sans-serif">
<text x="126.8" y="114.8" font-size="16.5" fill="#ebebeb" font-weight="bold" textLength="417.9" lengthAdjust="spacingAndGlyphs" >Website-Builder-Insider-Sample.gif @ 100% (RGB/8) *</text>
<path d="M557 105.500l8.500 8.500M565.500 105.500l-8.500 8.500" stroke="#c4c4c4" stroke-width="1.500" fill="none"/>
<path d="M14 93.500l-3.600 3.100 3.600 3.100M20 93.500l-3.600 3.100 3.600 3.100" stroke="#d0d0d0" stroke-width="1.100" fill="none"/>
<path d="M39.5 111v6M42.5 111v6M45.5 111v6M48.5 111v6M51.5 111v6M54.5 111v6M57.5 111v6M60.5 111v6M63.5 111v6M66.5 111v6" stroke="#454545" stroke-width="1"/>
</g>
<g id="toolbar">
<rect x="6.7" y="132.2" width="46.2" height="36.6" fill="#383838" rx="3.5" stroke="#626262" stroke-width="1"/>
<path d="M22.000000000000004 151.3H37.2M29.6 143.70000000000002V158.9" stroke="#dcdcdc" stroke-width="1.8" fill="none"/><path d="M18.200000000000003 151.3l4.8 -3.9v7.8z M41.0 151.3l-4.8 -3.9v7.8z M29.6 139.9l-3.9 4.8h7.8z M29.6 162.70000000000002l-3.9 -4.8h7.8z" fill="#dcdcdc"/>
<path d="M49.2 159.7V164.7h-5.2zM98.2 159.7V164.7h-5.2zM49.2 198.7V203.7h-5.2zM98.2 198.7V203.7h-5.2zM49.2 237.7V242.7h-5.2zM49.2 276.7V281.7h-5.2zM98.2 276.7V281.7h-5.2zM49.2 315.7V320.7h-5.2zM98.2 315.7V320.7h-5.2zM49.2 354.7V359.7h-5.2zM98.2 354.7V359.7h-5.2zM49.2 393.7V398.7h-5.2zM98.2 393.7V398.7h-5.2zM49.2 432.7V437.7h-5.2zM98.2 432.7V437.7h-5.2zM49.2 471.7V476.7h-5.2zM98.2 471.7V476.7h-5.2zM49.2 510.70000000000005V515.7h-5.2zM98.2 510.70000000000005V515.7h-5.2zM98.2 549.7V554.7h-5.2z" fill="#b4b4b4"/>
<path d="M68 145.200V142h4.200 M75.400 142h6 M85.300 142h4.500v3.200 M89.800 148.800v4.200 M89.800 155.900V159h-4.500 M81.400 159h-6 M72.200 159H68v-3.100 M68 153v-4.200" fill="none" stroke="#dcdcdc" stroke-width="2"/>
<path d="M25.800 191.600L18.600 180.500l13 5.400 8.600-8v13.500l-9.800 4.200" fill="none" stroke="#dcdcdc" stroke-width="1.600" stroke-linejoin="miter"/>
<circle cx="27.600" cy="193.800" r="2.500" fill="none" stroke="#dcdcdc" stroke-width="1.500"/>
<path d="M25.400 195c-2 1.600-4.200 2.600-6.600 3.300 M28.600 196.200c-1 2.300-2.400 4.200-4.200 5.600" fill="none" stroke="#dcdcdc" stroke-width="1.500"/>
<ellipse cx="72.500" cy="191" rx="6.200" ry="9.300" fill="none" stroke="#dcdcdc" stroke-width="1.800" stroke-dasharray="1.700 1.620"/>
<path d="M84 184.500L93.500 178v12l-5 5.500-9 6-6-3z" fill="#535353"/>
<path d="M91.900 178.700Q92.600 182 92.200 185.900L88.400 190L85 186.600Q88 182 91.900 178.700z M85.400 187.900C82.600 187.100 80.200 188.500 79.400 191C78.800 193.200 78.700 196 76.200 197.900C80.600 198.500 85.400 197.100 87.200 193.700C88 192.100 88.100 190.600 87.500 189.900z" fill="#dcdcdc"/>
<path d="M22.500 216.400v18.300h10.500 M25.400 221.800h10.400v18.800 M15.400 221.800h4.200 M38.800 234.700h3.700" fill="none" stroke="#dcdcdc" stroke-width="2.200"/>
<rect x="68" y="219.400" width="22.400" height="18.300" fill="#707070" stroke="#dcdcdc" stroke-width="1.400"/>
<path d="M68 219.400l22.400 18.300M90.400 219.400L68 237.700" stroke="#dcdcdc" stroke-width="1.300"/>
<path d="M66.500 217.900h3v3h-3z M88.900 217.900h3v3h-3z M66.500 236.200h3v3h-3z M88.900 236.200h3v3h-3z" fill="#dcdcdc"/>
<g transform="translate(32.800 264) rotate(-45)"><rect x="-18.800" y="-2.250" width="17.500" height="4.500" rx="2.250" fill="none" stroke="#dcdcdc" stroke-width="1.600"/><rect x="-2.500" y="-6.200" width="5" height="12.400" fill="#dcdcdc"/><rect x="0" y="-3.300" width="10.600" height="6.600" rx="3.300" fill="#dcdcdc"/></g>
<rect x="68.800" y="260.300" width="18.600" height="15.300" rx="2.200" fill="none" stroke="#dcdcdc" stroke-width="1.600"/>
<rect x="71" y="263.5" width="14.6" height="9.2" fill="#727272" />
<path d="M73.4 257.300v3M77.6 257.300v3M82.5 257.300v3M75 275.600v3M78.8 275.600v3M83.3 275.600v3M66.200 263.7h2.800 M87.400 263.7h3M66.200 267.8h2.800 M87.400 267.8h3M66.200 272.3h2.800 M87.400 272.3h3" stroke="#dcdcdc" stroke-width="1.500" fill="none"/>
<path transform="translate(0 0)" d="M40.700 294.800c0.800 0.600 0.400 1.800-0.200 2.800l-9 12.200-3-2.200 9.400-11.600c0.800-1 2-1.800 2.800-1.200z M27.600 308.300c2.800 1.600 3.200 4.400 1.400 6.600-2.400 2.800-6 3.200-9.800 2.800 1.600-1.200 2-2.600 2.400-4.600 0.600-3.200 3-5.800 6-4.800z" fill="#dcdcdc"/>
<path d="M78.300 294.600a4.700 4.700 0 0 1 2.500 8.700c-0.700 0.500-0.900 1.200-0.700 2.200l0.500 3c0.100 0.800 0.600 1.200 1.400 1.200h4.600c1 0 1.600 0.600 1.600 1.600v3.500H68.700v-3.500c0-1 0.600-1.600 1.600-1.600h4.600c0.800 0 1.300-0.400 1.400-1.200l0.500-3c0.200-1 0-1.700-0.700-2.200a4.700 4.700 0 0 1 2.200-8.700z M69.200 316.200h18.400v2H69.200z" fill="#dcdcdc"/>
<path transform="translate(0 40)" d="M40.700 294.800c0.800 0.600 0.400 1.800-0.200 2.800l-9 12.200-3-2.200 9.400-11.600c0.800-1 2-1.800 2.800-1.200z M27.600 308.300c2.800 1.600 3.200 4.400 1.400 6.600-2.400 2.800-6 3.200-9.800 2.800 1.600-1.200 2-2.600 2.400-4.600 0.600-3.200 3-5.800 6-4.800z" fill="#dcdcdc"/>
<path d="M35.600 338.600c-3-4-9.600-5.600-14-3-3.600 2.200-3 7 0.600 8 2.800 0.800 5.200-1.200 4.600-3.400-0.400-1.600-2.200-2-3-0.800 M40.600 342.600c3 6-1.600 12.800-9.600 14.400" fill="none" stroke="#dcdcdc" stroke-width="1.300" stroke-linecap="round"/>
<path d="M82.300 336l6.200 6-10.800 11.600H89.700v1.400H71.800l-4.200-4.200z" fill="#dcdcdc"/>
<path d="M74.400 345.800l4.600 4.600-3.200 3.400h-3.600l-3-3z" fill="#535353"/>
<defs><linearGradient id="gr" x1="0" x2="1" y1="0" y2="0"><stop offset="0" stop-color="#1c1c1c"/><stop offset="1" stop-color="#e4e4e4"/></linearGradient></defs>
<rect x="19" y="375.600" width="21.800" height="17.400" fill="url(#gr)" stroke="#dcdcdc" stroke-width="1.600"/>
<path d="M79 373c3.600-0.600 7.600-0.400 8.600 0.600 0.800 5 1 9.200-0.400 12.800-1.600 3-4.200 4-7.400 3.400l3.600-7.200-1.200-0.600-7.600 12.200c-1 1.600-3 2.200-4.400 1.200-1.200-0.800-1.400-2.400-0.400-3.600l7-8.800-0.800-0.800-4.600 4c0.200-1.200 0.400-2-0.600-3.200 0.400-1.200 0.200-2-0.400-3 0.400-3.600 3.800-6.200 8.600-7z" fill="#dcdcdc"/>
<circle cx="33" cy="420" r="8" fill="#dcdcdc"/>
<path d="M27.600 425.500L19 434" stroke="#dcdcdc" stroke-width="2.600" fill="none"/>
<path d="M82.600 413l6.800 6.800-2.600 2.400-6.800-6.800z" fill="#dcdcdc"/>
<path d="M79.800 416.400l-7 3.600-3.400 13.200 13.800-3.200 3.400-6.800z M69.400 433.200l8.400-8.200" fill="none" stroke="#dcdcdc" stroke-width="1.500" stroke-linejoin="round"/>
<circle cx="78.200" cy="424.600" r="2" fill="#dcdcdc"/>
<text x="30.200" y="472.400" font-family="Liberation Serif, serif" font-weight="bold" font-size="29.500" fill="#dcdcdc" stroke="#dcdcdc" stroke-width="0.700" text-anchor="middle">T</text>
<path d="M71 450.200v21.500l5.300-5 4.900 7.900 2.100-1.200-4.600-8.200 7.600-0.900z" fill="#dcdcdc"/>
<path d="M18.600 501.400l5.400-9.200h11.200l5.400 9.200-5.400 9.300H24z" fill="#727272" stroke="#dcdcdc" stroke-width="1.400"/>
<path d="M70 495c3-5 10-6.400 15.600-2.600" fill="none" stroke="#dcdcdc" stroke-width="1.200"/>
<path d="M87.500 489.200l4.600 5.800-8.400 0.200z" fill="#dcdcdc"/>
<path d="M79 493.200l11.400 10.300-9.600 8.500z" fill="#dcdcdc"/>
<path d="M66.600 505.800c1-0.800 2-0.600 2.800 0.200l2.200 2.400v-9.200c0-1.200 1.600-1.200 1.600 0v6h0.800v-7.600c0-1.200 1.700-1.200 1.700 0v7.400h0.800v-6.800c0-1.200 1.700-1.200 1.700 0v7.200h0.800v-5c0-1.200 1.600-1.200 1.600 0l0.400 8c0.200 3.400-1.400 5.600-5 5.600-2.600 0-4.200-0.800-5.600-3z" fill="#dcdcdc" stroke="#535353" stroke-width="0.500"/>
<circle cx="26.700" cy="537.700" r="8.500" fill="none" stroke="#dcdcdc" stroke-width="1.900"/>
<path d="M33 544l7.600 7.400" stroke="#dcdcdc" stroke-width="2.800" stroke-linecap="round" fill="none"/>
<path d="M24.400 533c3-0.800 6 0.800 7 4" stroke="#dcdcdc" stroke-width="1.200" fill="none"/>
<circle cx="69.800" cy="540.900" r="2.900" fill="#dcdcdc"/><circle cx="78.400" cy="540.900" r="2.900" fill="#dcdcdc"/><circle cx="87" cy="540.900" r="2.900" fill="#dcdcdc"/>
<rect x="49" y="595" width="38" height="39" fill="#3a3a3a" />
<rect x="50.5" y="596.7" width="35.5" height="36" fill="#ffffff" />
<rect x="52.6" y="598.8" width="31.3" height="31.8" fill="#4793ff" />
<rect x="26.5" y="571.2" width="38.5" height="39" fill="#3a3a3a" />
<rect x="28" y="572.8" width="36.2" height="36" fill="#ffffff" />
<rect x="30" y="575" width="32" height="31.6" fill="#ef6a10" />
<path d="M75.800 575.400l4.600-4v2.900h8v8.300h2.900l-4 4.600-4-4.600h2.900v-6h-5.800v2.800z" fill="#dcdcdc"/>
<rect x="32" y="627.2" width="11.1" height="10.8" fill="#d4d4d4" />
<rect x="28" y="623.1" width="9" height="8.7" fill="#141414" stroke="#d8d8d8" stroke-width="2.200"/>
<rect x="17.300" y="654.500" width="24.400" height="18.200" fill="none" stroke="#dcdcdc" stroke-width="1.100"/>
<circle cx="29.500" cy="663.500" r="6.200" fill="none" stroke="#dcdcdc" stroke-width="1.500" stroke-dasharray="1.800 1.450"/>
<rect x="66.600" y="658.800" width="16.400" height="13.200" fill="#535353" stroke="#dcdcdc" stroke-width="1.200"/>
<rect x="66" y="657.6" width="17.6" height="2.4" fill="#dcdcdc" />
<rect x="73.700" y="654.400" width="16.700" height="12.600" fill="#535353" stroke="#dcdcdc" stroke-width="1.200"/>
<rect x="73.1" y="653.2" width="17.9" height="2.6" fill="#dcdcdc" />
<path d="M98.200 673.600v5h-5.200z" fill="#b4b4b4"/>
</g>
<g id="status" font-family="Liberation Sans, sans-serif">
<rect x="108" y="794" width="1430" height="22" fill="#535353" />
<rect x="112" y="794" width="71" height="21.5" fill="#424242" />
<text x="127.0" y="808.4" font-size="14.5" fill="#e4e4e4" textLength="38.6" lengthAdjust="spacingAndGlyphs" >100%</text>
<rect x="183" y="794" width="274" height="21.5" fill="#535353" />
<text x="230.4" y="808.4" font-size="14.5" fill="#dadada" textLength="159.8" lengthAdjust="spacingAndGlyphs" >500 px x 281 px (72 ppi)</text>
<path d="M445 796.500l3.500 6.300-3.500 6.300" fill="none" stroke="#d0d0d0" stroke-width="1.200"/>
<rect x="457.6" y="794" width="1.2" height="21.5" fill="#444444" />
<rect x="458.8" y="794" width="1060.2" height="21.5" fill="#4a4a4a" />
<rect x="112" y="794" width="1421" height="0.8" fill="#454545" />
<path d="M476.800 800l-4.500 4.500 4.500 4.500" fill="none" stroke="#8c8c8c" stroke-width="1.200"/>
<path d="M1500.800 800l4.500 4.500-4.500 4.500" fill="none" stroke="#8c8c8c" stroke-width="1.200"/>
<rect x="753" y="795.5" width="470" height="17" fill="#696969" rx="2"/>
<rect x="1519" y="794" width="14" height="21.5" fill="#535353" />
<rect x="112" y="815.5" width="1421" height="3" fill="#383838" />
</g>
<g id="timeline" font-family="Liberation Sans, sans-serif">
<rect x="112" y="818.5" width="1421" height="41.5" fill="#424242" />
<rect x="112" y="818.5" width="85.3" height="41.5" fill="#535353" />
<rect x="197.3" y="818.5" width="1.4" height="41.5" fill="#3a3a3a" />
<rect x="197.3" y="858.7" width="1335.7" height="1.6" fill="#3a3a3a" />
<text x="125.3" y="842.3" font-size="15.5" fill="#e6e6e6" font-weight="bold" textLength="60.2" lengthAdjust="spacingAndGlyphs" >Timeline</text>
<path d="M1520 835h11.500M1520 838.200h11.500M1520 841.400h11.500M1520 844.600h11.500" stroke="#c8c8c8" stroke-width="1.400"/>
<rect x="112" y="860" width="1421" height="107" fill="#4c4c4c" />
<rect x="112" y="860" width="1421" height="3" fill="#535353" />
<clipPath id="fc"><rect x="112" y="860" width="1420.500" height="107"/></clipPath>
<g clip-path="url(#fc)">
<rect x="111.2" y="863" width="80.3" height="101.7" fill="#6a6a6a" />
<rect x="115.5" y="867.5" width="71.4" height="72" fill="#5a5a5a" stroke="#f0f0f0" stroke-width="1.100"/>
<rect x="119.7" y="870.6" width="62.6" height="65.4" fill="#6a6a6a" />
<rect x="119.7" y="923" width="62.6" height="13" fill="#585858" />
<rect x="119.7" y="870.2" width="18.5" height="19" fill="#727272" />
<svg x="120.00" y="887" width="62.400" height="36" viewBox="0 0 500 281" preserveAspectRatio="none"><rect x="0" y="0" width="500" height="281" fill="#1a1a22" /><circle cx="488" cy="27.3" r="77.4" fill="none" stroke="#fff" stroke-width="2.3"/><circle cx="488" cy="27.3" r="59.0" fill="none" stroke="#2af0e0" stroke-width="1.6"/><circle cx="488" cy="27.3" r="49.4" fill="none" stroke="#fff" stroke-width="3.4" stroke-dasharray="8.6 4"/><path d="M463.1 90.0A67.4 67.4 0 0 1 421.2 17.9" fill="none" stroke="#2af0e0" stroke-width="9.0"/><path d="M424.6 4.2A67.4 67.4 0 0 1 478.6 -39.5" fill="none" stroke="#2af0e0" stroke-width="9.0"/><circle cx="29.6" cy="266" r="75.5" fill="none" stroke="#fff" stroke-width="2.3"/><circle cx="29.6" cy="266" r="57.6" fill="none" stroke="#2af0e0" stroke-width="1.6"/><circle cx="29.6" cy="266" r="48.2" fill="none" stroke="#fff" stroke-width="3.4" stroke-dasharray="8.6 4"/><path d="M-32.2 243.5A65.8 65.8 0 0 1 32.8 200.3" fill="none" stroke="#2af0e0" stroke-width="8.8"/><path d="M51.6 204.0A65.8 65.8 0 0 1 81.5 225.5" fill="none" stroke="#2af0e0" stroke-width="8.8"/><text x="128.8" y="98.5" textLength="246" lengthAdjust="spacingAndGlyphs" font-family="Liberation Sans, sans-serif" font-weight="bold" font-size="36.5" fill="#f4f4f4" stroke="#f4f4f4" stroke-width="1.5" text-rendering="geometricPrecision">WEBSITE</text><text x="134" y="150.1" textLength="231.5" lengthAdjust="spacingAndGlyphs" font-family="Liberation Sans, sans-serif" font-weight="bold" font-size="36.5" fill="#f4f4f4" stroke="#f4f4f4" stroke-width="1.5" text-rendering="geometricPrecision">BUILDER</text><text x="141" y="201.5" textLength="217.5" lengthAdjust="spacingAndGlyphs" font-family="Liberation Sans, sans-serif" font-weight="bold" font-size="36.5" fill="#f4f4f4" stroke="#f4f4f4" stroke-width="1.5" text-rendering="geometricPrecision">INSIDER</text></svg>
<text x="124.6" y="885.3" font-size="16" fill="#ffffff" font-weight="bold" font-family="Liberation Serif, serif">1</text>
<circle cx="138.8" cy="945.900" r="2.500" fill="#dedede"/><circle cx="134.1" cy="952" r="2.500" fill="#a6a6a6"/><circle cx="126.3" cy="952" r="2.500" fill="#7c7c7c"/><circle cx="129.4" cy="958.100" r="2.500" fill="#989898"/>
<path d="M159.8 957.100h1.800v1.700h-1.800z M164.9 957.100h1.800v1.700h-1.800z M169.9 957.100h1.800v1.700h-1.800z" fill="#e8e8e8"/>
<path d="M175.9 950l4.600 5.700 4.600-5.700" fill="none" stroke="#dcdcdc" stroke-width="1.100"/>
<rect x="193.6" y="863" width="80.3" height="101.7" fill="#555555" />
<rect x="200.8" y="870.6" width="66.2" height="66.8" fill="#575757" stroke="#474747" stroke-width="1.400"/>
<path d="M267.0 871v66.400h-65.500" fill="none" stroke="#656565" stroke-width="1.300"/>
<rect x="200.1" y="869.9" width="20.7" height="19.3" fill="#5b5b5b" />
<svg x="203.05" y="887" width="62.400" height="36" viewBox="0 0 500 281" preserveAspectRatio="none"><rect x="0" y="0" width="500" height="281" fill="#1a1a22" /><circle cx="488" cy="27.3" r="77.4" fill="none" stroke="#fff" stroke-width="2.3"/><circle cx="488" cy="27.3" r="59.0" fill="none" stroke="#2af0e0" stroke-width="1.6"/><circle cx="488" cy="27.3" r="49.4" fill="none" stroke="#fff" stroke-width="3.4" stroke-dasharray="8.6 4"/><path d="M463.1 90.0A67.4 67.4 0 0 1 421.2 17.9" fill="none" stroke="#2af0e0" stroke-width="9.0"/><path d="M424.6 4.2A67.4 67.4 0 0 1 478.6 -39.5" fill="none" stroke="#2af0e0" stroke-width="9.0"/><circle cx="29.6" cy="266" r="75.5" fill="none" stroke="#fff" stroke-width="2.3"/><circle cx="29.6" cy="266" r="57.6" fill="none" stroke="#2af0e0" stroke-width="1.6"/><circle cx="29.6" cy="266" r="48.2" fill="none" stroke="#fff" stroke-width="3.4" stroke-dasharray="8.6 4"/><path d="M-32.2 243.5A65.8 65.8 0 0 1 32.8 200.3" fill="none" stroke="#2af0e0" stroke-width="8.8"/><path d="M51.6 204.0A65.8 65.8 0 0 1 81.5 225.5" fill="none" stroke="#2af0e0" stroke-width="8.8"/><text x="128.8" y="98.5" textLength="246" lengthAdjust="spacingAndGlyphs" font-family="Liberation Sans, sans-serif" font-weight="bold" font-size="36.5" fill="#f4f4f4" stroke="#f4f4f4" stroke-width="1.5" text-rendering="geometricPrecision">WEBSITE</text><text x="134" y="150.1" textLength="231.5" lengthAdjust="spacingAndGlyphs" font-family="Liberation Sans, sans-serif" font-weight="bold" font-size="36.5" fill="#f4f4f4" stroke="#f4f4f4" stroke-width="1.5" text-rendering="geometricPrecision">BUILDER</text><text x="141" y="201.5" textLength="217.5" lengthAdjust="spacingAndGlyphs" font-family="Liberation Sans, sans-serif" font-weight="bold" font-size="36.5" fill="#f4f4f4" stroke="#f4f4f4" stroke-width="1.5" text-rendering="geometricPrecision">INSIDER</text></svg>
<text x="207.5" y="885.3" font-size="16.5" fill="#f0f0f0" textLength="8.1" lengthAdjust="spacingAndGlyphs" font-family="Liberation Serif, serif">2</text>
<circle cx="221.2" cy="945.900" r="2.500" fill="#dedede"/><circle cx="216.5" cy="952" r="2.500" fill="#a6a6a6"/><circle cx="208.8" cy="952" r="2.500" fill="#7c7c7c"/><circle cx="211.9" cy="958.100" r="2.500" fill="#989898"/>
<path d="M242.2 957.100h1.800v1.700h-1.800z M247.3 957.100h1.800v1.700h-1.800z M252.3 957.100h1.800v1.700h-1.800z" fill="#e8e8e8"/>
<path d="M258.4 950l4.600 5.700 4.600-5.700" fill="none" stroke="#dcdcdc" stroke-width="1.100"/>
<rect x="276.1" y="863" width="80.3" height="101.7" fill="#555555" />
<rect x="283.2" y="870.6" width="66.2" height="66.8" fill="#575757" stroke="#474747" stroke-width="1.400"/>
<path d="M349.4 871v66.400h-65.500" fill="none" stroke="#656565" stroke-width="1.300"/>
<rect x="282.6" y="869.9" width="20.7" height="19.3" fill="#5b5b5b" />
<svg x="285.50" y="887" width="62.400" height="36" viewBox="0 0 500 281" preserveAspectRatio="none"><rect x="0" y="0" width="500" height="281" fill="#1a1a22" /><circle cx="488" cy="27.3" r="77.4" fill="none" stroke="#fff" stroke-width="2.3"/><circle cx="488" cy="27.3" r="59.0" fill="none" stroke="#2af0e0" stroke-width="1.6"/><circle cx="488" cy="27.3" r="49.4" fill="none" stroke="#fff" stroke-width="3.4" stroke-dasharray="8.6 4"/><path d="M463.1 90.0A67.4 67.4 0 0 1 421.2 17.9" fill="none" stroke="#2af0e0" stroke-width="9.0"/><path d="M424.6 4.2A67.4 67.4 0 0 1 478.6 -39.5" fill="none" stroke="#2af0e0" stroke-width="9.0"/><circle cx="29.6" cy="266" r="75.5" fill="none" stroke="#fff" stroke-width="2.3"/><circle cx="29.6" cy="266" r="57.6" fill="none" stroke="#2af0e0" stroke-width="1.6"/><circle cx="29.6" cy="266" r="48.2" fill="none" stroke="#fff" stroke-width="3.4" stroke-dasharray="8.6 4"/><path d="M-32.2 243.5A65.8 65.8 0 0 1 32.8 200.3" fill="none" stroke="#2af0e0" stroke-width="8.8"/><path d="M51.6 204.0A65.8 65.8 0 0 1 81.5 225.5" fill="none" stroke="#2af0e0" stroke-width="8.8"/><text x="128.8" y="98.5" textLength="246" lengthAdjust="spacingAndGlyphs" font-family="Liberation Sans, sans-serif" font-weight="bold" font-size="36.5" fill="#f4f4f4" stroke="#f4f4f4" stroke-width="1.5" text-rendering="geometricPrecision">WEBSITE</text><text x="134" y="150.1" textLength="231.5" lengthAdjust="spacingAndGlyphs" font-family="Liberation Sans, sans-serif" font-weight="bold" font-size="36.5" fill="#f4f4f4" stroke="#f4f4f4" stroke-width="1.5" text-rendering="geometricPrecision">BUILDER</text><text x="141" y="201.5" textLength="217.5" lengthAdjust="spacingAndGlyphs" font-family="Liberation Sans, sans-serif" font-weight="bold" font-size="36.5" fill="#f4f4f4" stroke="#f4f4f4" stroke-width="1.5" text-rendering="geometricPrecision">INSIDER</text></svg>
<text x="289.9" y="885.3" font-size="16.5" fill="#f0f0f0" textLength="8.1" lengthAdjust="spacingAndGlyphs" font-family="Liberation Serif, serif">3</text>
<circle cx="303.7" cy="945.900" r="2.500" fill="#dedede"/><circle cx="299.0" cy="952" r="2.500" fill="#a6a6a6"/><circle cx="291.3" cy="952" r="2.500" fill="#7c7c7c"/><circle cx="294.4" cy="958.100" r="2.500" fill="#989898"/>
<path d="M324.6 957.100h1.800v1.700h-1.800z M329.8 957.100h1.800v1.700h-1.800z M334.8 957.100h1.800v1.700h-1.800z" fill="#e8e8e8"/>
<path d="M340.9 950l4.600 5.700 4.600-5.700" fill="none" stroke="#dcdcdc" stroke-width="1.100"/>
<rect x="358.5" y="863" width="80.3" height="101.7" fill="#555555" />
<rect x="365.7" y="870.6" width="66.2" height="66.8" fill="#575757" stroke="#474747" stroke-width="1.400"/>
<path d="M431.9 871v66.400h-65.500" fill="none" stroke="#656565" stroke-width="1.300"/>
<rect x="365.0" y="869.9" width="20.7" height="19.3" fill="#5b5b5b" />
<svg x="367.95" y="887" width="62.400" height="36" viewBox="0 0 500 281" preserveAspectRatio="none"><rect x="0" y="0" width="500" height="281" fill="#1a1a22" /><circle cx="488" cy="27.3" r="77.4" fill="none" stroke="#fff" stroke-width="2.3"/><circle cx="488" cy="27.3" r="59.0" fill="none" stroke="#2af0e0" stroke-width="1.6"/><circle cx="488" cy="27.3" r="49.4" fill="none" stroke="#fff" stroke-width="3.4" stroke-dasharray="8.6 4"/><path d="M463.1 90.0A67.4 67.4 0 0 1 421.2 17.9" fill="none" stroke="#2af0e0" stroke-width="9.0"/><path d="M424.6 4.2A67.4 67.4 0 0 1 478.6 -39.5" fill="none" stroke="#2af0e0" stroke-width="9.0"/><circle cx="29.6" cy="266" r="75.5" fill="none" stroke="#fff" stroke-width="2.3"/><circle cx="29.6" cy="266" r="57.6" fill="none" stroke="#2af0e0" stroke-width="1.6"/><circle cx="29.6" cy="266" r="48.2" fill="none" stroke="#fff" stroke-width="3.4" stroke-dasharray="8.6 4"/><path d="M-32.2 243.5A65.8 65.8 0 0 1 32.8 200.3" fill="none" stroke="#2af0e0" stroke-width="8.8"/><path d="M51.6 204.0A65.8 65.8 0 0 1 81.5 225.5" fill="none" stroke="#2af0e0" stroke-width="8.8"/><text x="128.8" y="98.5" textLength="246" lengthAdjust="spacingAndGlyphs" font-family="Liberation Sans, sans-serif" font-weight="bold" font-size="36.5" fill="#f4f4f4" stroke="#f4f4f4" stroke-width="1.5" text-rendering="geometricPrecision">WEBSITE</text><text x="134" y="150.1" textLength="231.5" lengthAdjust="spacingAndGlyphs" font-family="Liberation Sans, sans-serif" font-weight="bold" font-size="36.5" fill="#f4f4f4" stroke="#f4f4f4" stroke-width="1.5" text-rendering="geometricPrecision">BUILDER</text><text x="141" y="201.5" textLength="217.5" lengthAdjust="spacingAndGlyphs" font-family="Liberation Sans, sans-serif" font-weight="bold" font-size="36.5" fill="#f4f4f4" stroke="#f4f4f4" stroke-width="1.5" text-rendering="geometricPrecision">INSIDER</text></svg>
<text x="372.4" y="885.3" font-size="16.5" fill="#f0f0f0" textLength="8.1" lengthAdjust="spacingAndGlyphs" font-family="Liberation Serif, serif">4</text>
<circle cx="386.1" cy="945.900" r="2.500" fill="#dedede"/><circle cx="381.4" cy="952" r="2.500" fill="#a6a6a6"/><circle cx="373.7" cy="952" r="2.500" fill="#7c7c7c"/><circle cx="376.8" cy="958.100" r="2.500" fill="#989898"/>
<path d="M407.1 957.100h1.800v1.700h-1.800z M412.2 957.100h1.800v1.700h-1.800z M417.2 957.100h1.800v1.700h-1.800z" fill="#e8e8e8"/>
<path d="M423.3 950l4.600 5.700 4.600-5.700" fill="none" stroke="#dcdcdc" stroke-width="1.100"/>
<rect x="441.0" y="863" width="80.3" height="101.7" fill="#555555" />
<rect x="448.2" y="870.6" width="66.2" height="66.8" fill="#575757" stroke="#474747" stroke-width="1.400"/>
<path d="M514.4 871v66.400h-65.500" fill="none" stroke="#656565" stroke-width="1.300"/>
<rect x="447.5" y="869.9" width="20.7" height="19.3" fill="#5b5b5b" />
<svg x="450.40" y="887" width="62.400" height="36" viewBox="0 0 500 281" preserveAspectRatio="none"><rect x="0" y="0" width="500" height="281" fill="#1a1a22" /><circle cx="488" cy="27.3" r="77.4" fill="none" stroke="#fff" stroke-width="2.3"/><circle cx="488" cy="27.3" r="59.0" fill="none" stroke="#2af0e0" stroke-width="1.6"/><circle cx="488" cy="27.3" r="49.4" fill="none" stroke="#fff" stroke-width="3.4" stroke-dasharray="8.6 4"/><path d="M463.1 90.0A67.4 67.4 0 0 1 421.2 17.9" fill="none" stroke="#2af0e0" stroke-width="9.0"/><path d="M424.6 4.2A67.4 67.4 0 0 1 478.6 -39.5" fill="none" stroke="#2af0e0" stroke-width="9.0"/><circle cx="29.6" cy="266" r="75.5" fill="none" stroke="#fff" stroke-width="2.3"/><circle cx="29.6" cy="266" r="57.6" fill="none" stroke="#2af0e0" stroke-width="1.6"/><circle cx="29.6" cy="266" r="48.2" fill="none" stroke="#fff" stroke-width="3.4" stroke-dasharray="8.6 4"/><path d="M-32.2 243.5A65.8 65.8 0 0 1 32.8 200.3" fill="none" stroke="#2af0e0" stroke-width="8.8"/><path d="M51.6 204.0A65.8 65.8 0 0 1 81.5 225.5" fill="none" stroke="#2af0e0" stroke-width="8.8"/><text x="128.8" y="98.5" textLength="246" lengthAdjust="spacingAndGlyphs" font-family="Liberation Sans, sans-serif" font-weight="bold" font-size="36.5" fill="#f4f4f4" stroke="#f4f4f4" stroke-width="1.5" text-rendering="geometricPrecision">WEBSITE</text><text x="134" y="150.1" textLength="231.5" lengthAdjust="spacingAndGlyphs" font-family="Liberation Sans, sans-serif" font-weight="bold" font-size="36.5" fill="#f4f4f4" stroke="#f4f4f4" stroke-width="1.5" text-rendering="geometricPrecision">BUILDER</text><text x="141" y="201.5" textLength="217.5" lengthAdjust="spacingAndGlyphs" font-family="Liberation Sans, sans-serif" font-weight="bold" font-size="36.5" fill="#f4f4f4" stroke="#f4f4f4" stroke-width="1.5" text-rendering="geometricPrecision">INSIDER</text></svg>
<text x="454.9" y="885.3" font-size="16.5" fill="#f0f0f0" textLength="8.1" lengthAdjust="spacingAndGlyphs" font-family="Liberation Serif, serif">5</text>
<circle cx="468.6" cy="945.900" r="2.500" fill="#dedede"/><circle cx="463.9" cy="952" r="2.500" fill="#a6a6a6"/><circle cx="456.2" cy="952" r="2.500" fill="#7c7c7c"/><circle cx="459.3" cy="958.100" r="2.500" fill="#989898"/>
<path d="M489.6 957.100h1.800v1.700h-1.800z M494.7 957.100h1.800v1.700h-1.800z M499.7 957.100h1.800v1.700h-1.800z" fill="#e8e8e8"/>
<path d="M505.8 950l4.600 5.700 4.600-5.700" fill="none" stroke="#dcdcdc" stroke-width="1.100"/>
<rect x="523.4" y="863" width="80.3" height="101.7" fill="#555555" />
<rect x="530.6" y="870.6" width="66.2" height="66.8" fill="#575757" stroke="#474747" stroke-width="1.400"/>
<path d="M596.8 871v66.400h-65.500" fill="none" stroke="#656565" stroke-width="1.300"/>
<rect x="529.9" y="869.9" width="20.7" height="19.3" fill="#5b5b5b" />
<svg x="532.85" y="887" width="62.400" height="36" viewBox="0 0 500 281" preserveAspectRatio="none"><rect x="0" y="0" width="500" height="281" fill="#1a1a22" /><circle cx="488" cy="27.3" r="77.4" fill="none" stroke="#fff" stroke-width="2.3"/><circle cx="488" cy="27.3" r="59.0" fill="none" stroke="#2af0e0" stroke-width="1.6"/><circle cx="488" cy="27.3" r="49.4" fill="none" stroke="#fff" stroke-width="3.4" stroke-dasharray="8.6 4"/><path d="M463.1 90.0A67.4 67.4 0 0 1 421.2 17.9" fill="none" stroke="#2af0e0" stroke-width="9.0"/><path d="M424.6 4.2A67.4 67.4 0 0 1 478.6 -39.5" fill="none" stroke="#2af0e0" stroke-width="9.0"/><circle cx="29.6" cy="266" r="75.5" fill="none" stroke="#fff" stroke-width="2.3"/><circle cx="29.6" cy="266" r="57.6" fill="none" stroke="#2af0e0" stroke-width="1.6"/><circle cx="29.6" cy="266" r="48.2" fill="none" stroke="#fff" stroke-width="3.4" stroke-dasharray="8.6 4"/><path d="M-32.2 243.5A65.8 65.8 0 0 1 32.8 200.3" fill="none" stroke="#2af0e0" stroke-width="8.8"/><path d="M51.6 204.0A65.8 65.8 0 0 1 81.5 225.5" fill="none" stroke="#2af0e0" stroke-width="8.8"/><text x="128.8" y="98.5" textLength="246" lengthAdjust="spacingAndGlyphs" font-family="Liberation Sans, sans-serif" font-weight="bold" font-size="36.5" fill="#f4f4f4" stroke="#f4f4f4" stroke-width="1.5" text-rendering="geometricPrecision">WEBSITE</text><text x="134" y="150.1" textLength="231.5" lengthAdjust="spacingAndGlyphs" font-family="Liberation Sans, sans-serif" font-weight="bold" font-size="36.5" fill="#f4f4f4" stroke="#f4f4f4" stroke-width="1.5" text-rendering="geometricPrecision">BUILDER</text><text x="141" y="201.5" textLength="217.5" lengthAdjust="spacingAndGlyphs" font-family="Liberation Sans, sans-serif" font-weight="bold" font-size="36.5" fill="#f4f4f4" stroke="#f4f4f4" stroke-width="1.5" text-rendering="geometricPrecision">INSIDER</text></svg>
<text x="537.3" y="885.3" font-size="16.5" fill="#f0f0f0" textLength="8.1" lengthAdjust="spacingAndGlyphs" font-family="Liberation Serif, serif">6</text>
<circle cx="551.0" cy="945.900" r="2.500" fill="#dedede"/><circle cx="546.3" cy="952" r="2.500" fill="#a6a6a6"/><circle cx="538.6" cy="952" r="2.500" fill="#7c7c7c"/><circle cx="541.7" cy="958.100" r="2.500" fill="#989898"/>
<path d="M572.0 957.100h1.800v1.700h-1.800z M577.1 957.100h1.800v1.700h-1.800z M582.1 957.100h1.800v1.700h-1.800z" fill="#e8e8e8"/>
<path d="M588.2 950l4.600 5.700 4.600-5.700" fill="none" stroke="#dcdcdc" stroke-width="1.100"/>
<rect x="605.9" y="863" width="80.3" height="101.7" fill="#555555" />
<rect x="613.1" y="870.6" width="66.2" height="66.8" fill="#575757" stroke="#474747" stroke-width="1.400"/>
<path d="M679.3 871v66.400h-65.500" fill="none" stroke="#656565" stroke-width="1.300"/>
<rect x="612.4" y="869.9" width="20.7" height="19.3" fill="#5b5b5b" />
<svg x="615.30" y="887" width="62.400" height="36" viewBox="0 0 500 281" preserveAspectRatio="none"><rect x="0" y="0" width="500" height="281" fill="#1a1a22" /><circle cx="488" cy="27.3" r="77.4" fill="none" stroke="#fff" stroke-width="2.3"/><circle cx="488" cy="27.3" r="59.0" fill="none" stroke="#2af0e0" stroke-width="1.6"/><circle cx="488" cy="27.3" r="49.4" fill="none" stroke="#fff" stroke-width="3.4" stroke-dasharray="8.6 4"/><path d="M463.1 90.0A67.4 67.4 0 0 1 421.2 17.9" fill="none" stroke="#2af0e0" stroke-width="9.0"/><path d="M424.6 4.2A67.4 67.4 0 0 1 478.6 -39.5" fill="none" stroke="#2af0e0" stroke-width="9.0"/><circle cx="29.6" cy="266" r="75.5" fill="none" stroke="#fff" stroke-width="2.3"/><circle cx="29.6" cy="266" r="57.6" fill="none" stroke="#2af0e0" stroke-width="1.6"/><circle cx="29.6" cy="266" r="48.2" fill="none" stroke="#fff" stroke-width="3.4" stroke-dasharray="8.6 4"/><path d="M-32.2 243.5A65.8 65.8 0 0 1 32.8 200.3" fill="none" stroke="#2af0e0" stroke-width="8.8"/><path d="M51.6 204.0A65.8 65.8 0 0 1 81.5 225.5" fill="none" stroke="#2af0e0" stroke-width="8.8"/><text x="128.8" y="98.5" textLength="246" lengthAdjust="spacingAndGlyphs" font-family="Liberation Sans, sans-serif" font-weight="bold" font-size="36.5" fill="#f4f4f4" stroke="#f4f4f4" stroke-width="1.5" text-rendering="geometricPrecision">WEBSITE</text><text x="134" y="150.1" textLength="231.5" lengthAdjust="spacingAndGlyphs" font-family="Liberation Sans, sans-serif" font-weight="bold" font-size="36.5" fill="#f4f4f4" stroke="#f4f4f4" stroke-width="1.5" text-rendering="geometricPrecision">BUILDER</text><text x="141" y="201.5" textLength="217.5" lengthAdjust="spacingAndGlyphs" font-family="Liberation Sans, sans-serif" font-weight="bold" font-size="36.5" fill="#f4f4f4" stroke="#f4f4f4" stroke-width="1.5" text-rendering="geometricPrecision">INSIDER</text></svg>
<text x="619.8" y="885.3" font-size="16.5" fill="#f0f0f0" textLength="8.1" lengthAdjust="spacingAndGlyphs" font-family="Liberation Serif, serif">7</text>
<circle cx="633.5" cy="945.900" r="2.500" fill="#dedede"/><circle cx="628.8" cy="952" r="2.500" fill="#a6a6a6"/><circle cx="621.1" cy="952" r="2.500" fill="#7c7c7c"/><circle cx="624.2" cy="958.100" r="2.500" fill="#989898"/>
<path d="M654.5 957.100h1.800v1.700h-1.800z M659.5 957.100h1.800v1.700h-1.800z M664.5 957.100h1.800v1.700h-1.800z" fill="#e8e8e8"/>
<path d="M670.6 950l4.600 5.700 4.600-5.700" fill="none" stroke="#dcdcdc" stroke-width="1.100"/>
<rect x="688.3" y="863" width="80.3" height="101.7" fill="#555555" />
<rect x="695.5" y="870.6" width="66.2" height="66.8" fill="#575757" stroke="#474747" stroke-width="1.400"/>
<path d="M761.7 871v66.400h-65.500" fill="none" stroke="#656565" stroke-width="1.300"/>
<rect x="694.8" y="869.9" width="20.7" height="19.3" fill="#5b5b5b" />
<svg x="697.75" y="887" width="62.400" height="36" viewBox="0 0 500 281" preserveAspectRatio="none"><rect x="0" y="0" width="500" height="281" fill="#1a1a22" /><circle cx="488" cy="27.3" r="77.4" fill="none" stroke="#fff" stroke-width="2.3"/><circle cx="488" cy="27.3" r="59.0" fill="none" stroke="#2af0e0" stroke-width="1.6"/><circle cx="488" cy="27.3" r="49.4" fill="none" stroke="#fff" stroke-width="3.4" stroke-dasharray="8.6 4"/><path d="M463.1 90.0A67.4 67.4 0 0 1 421.2 17.9" fill="none" stroke="#2af0e0" stroke-width="9.0"/><path d="M424.6 4.2A67.4 67.4 0 0 1 478.6 -39.5" fill="none" stroke="#2af0e0" stroke-width="9.0"/><circle cx="29.6" cy="266" r="75.5" fill="none" stroke="#fff" stroke-width="2.3"/><circle cx="29.6" cy="266" r="57.6" fill="none" stroke="#2af0e0" stroke-width="1.6"/><circle cx="29.6" cy="266" r="48.2" fill="none" stroke="#fff" stroke-width="3.4" stroke-dasharray="8.6 4"/><path d="M-32.2 243.5A65.8 65.8 0 0 1 32.8 200.3" fill="none" stroke="#2af0e0" stroke-width="8.8"/><path d="M51.6 204.0A65.8 65.8 0 0 1 81.5 225.5" fill="none" stroke="#2af0e0" stroke-width="8.8"/><text x="128.8" y="98.5" textLength="246" lengthAdjust="spacingAndGlyphs" font-family="Liberation Sans, sans-serif" font-weight="bold" font-size="36.5" fill="#f4f4f4" stroke="#f4f4f4" stroke-width="1.5" text-rendering="geometricPrecision">WEBSITE</text><text x="134" y="150.1" textLength="231.5" lengthAdjust="spacingAndGlyphs" font-family="Liberation Sans, sans-serif" font-weight="bold" font-size="36.5" fill="#f4f4f4" stroke="#f4f4f4" stroke-width="1.5" text-rendering="geometricPrecision">BUILDER</text><text x="141" y="201.5" textLength="217.5" lengthAdjust="spacingAndGlyphs" font-family="Liberation Sans, sans-serif" font-weight="bold" font-size="36.5" fill="#f4f4f4" stroke="#f4f4f4" stroke-width="1.5" text-rendering="geometricPrecision">INSIDER</text></svg>
<text x="702.2" y="885.3" font-size="16.5" fill="#f0f0f0" textLength="8.1" lengthAdjust="spacingAndGlyphs" font-family="Liberation Serif, serif">8</text>
<circle cx="715.9" cy="945.900" r="2.500" fill="#dedede"/><circle cx="711.2" cy="952" r="2.500" fill="#a6a6a6"/><circle cx="703.5" cy="952" r="2.500" fill="#7c7c7c"/><circle cx="706.6" cy="958.100" r="2.500" fill="#989898"/>
<path d="M736.9 957.100h1.800v1.700h-1.800z M742.0 957.100h1.800v1.700h-1.800z M747.0 957.100h1.800v1.700h-1.800z" fill="#e8e8e8"/>
<path d="M753.1 950l4.600 5.700 4.600-5.700" fill="none" stroke="#dcdcdc" stroke-width="1.100"/>
<rect x="770.8" y="863" width="80.3" height="101.7" fill="#555555" />
<rect x="778.0" y="870.6" width="66.2" height="66.8" fill="#575757" stroke="#474747" stroke-width="1.400"/>
<path d="M844.2 871v66.400h-65.500" fill="none" stroke="#656565" stroke-width="1.300"/>
<rect x="777.2" y="869.9" width="20.7" height="19.3" fill="#5b5b5b" />
<svg x="780.20" y="887" width="62.400" height="36" viewBox="0 0 500 281" preserveAspectRatio="none"><rect x="0" y="0" width="500" height="281" fill="#1a1a22" /><circle cx="488" cy="27.3" r="77.4" fill="none" stroke="#fff" stroke-width="2.3"/><circle cx="488" cy="27.3" r="59.0" fill="none" stroke="#2af0e0" stroke-width="1.6"/><circle cx="488" cy="27.3" r="49.4" fill="none" stroke="#fff" stroke-width="3.4" stroke-dasharray="8.6 4"/><path d="M463.1 90.0A67.4 67.4 0 0 1 421.2 17.9" fill="none" stroke="#2af0e0" stroke-width="9.0"/><path d="M424.6 4.2A67.4 67.4 0 0 1 478.6 -39.5" fill="none" stroke="#2af0e0" stroke-width="9.0"/><circle cx="29.6" cy="266" r="75.5" fill="none" stroke="#fff" stroke-width="2.3"/><circle cx="29.6" cy="266" r="57.6" fill="none" stroke="#2af0e0" stroke-width="1.6"/><circle cx="29.6" cy="266" r="48.2" fill="none" stroke="#fff" stroke-width="3.4" stroke-dasharray="8.6 4"/><path d="M-32.2 243.5A65.8 65.8 0 0 1 32.8 200.3" fill="none" stroke="#2af0e0" stroke-width="8.8"/><path d="M51.6 204.0A65.8 65.8 0 0 1 81.5 225.5" fill="none" stroke="#2af0e0" stroke-width="8.8"/><text x="128.8" y="98.5" textLength="246" lengthAdjust="spacingAndGlyphs" font-family="Liberation Sans, sans-serif" font-weight="bold" font-size="36.5" fill="#f4f4f4" stroke="#f4f4f4" stroke-width="1.5" text-rendering="geometricPrecision">WEBSITE</text><text x="134" y="150.1" textLength="231.5" lengthAdjust="spacingAndGlyphs" font-family="Liberation Sans, sans-serif" font-weight="bold" font-size="36.5" fill="#f4f4f4" stroke="#f4f4f4" stroke-width="1.5" text-rendering="geometricPrecision">BUILDER</text><text x="141" y="201.5" textLength="217.5" lengthAdjust="spacingAndGlyphs" font-family="Liberation Sans, sans-serif" font-weight="bold" font-size="36.5" fill="#f4f4f4" stroke="#f4f4f4" stroke-width="1.5" text-rendering="geometricPrecision">INSIDER</text></svg>
<text x="784.6" y="885.3" font-size="16.5" fill="#f0f0f0" textLength="8.1" lengthAdjust="spacingAndGlyphs" font-family="Liberation Serif, serif">9</text>
<circle cx="798.4" cy="945.900" r="2.500" fill="#dedede"/><circle cx="793.6" cy="952" r="2.500" fill="#a6a6a6"/><circle cx="786.0" cy="952" r="2.500" fill="#7c7c7c"/><circle cx="789.1" cy="958.100" r="2.500" fill="#989898"/>
<path d="M819.4 957.100h1.800v1.700h-1.800z M824.4 957.100h1.800v1.700h-1.800z M829.4 957.100h1.800v1.700h-1.800z" fill="#e8e8e8"/>
<path d="M835.5 950l4.600 5.700 4.600-5.700" fill="none" stroke="#dcdcdc" stroke-width="1.100"/>
<rect x="853.2" y="863" width="80.3" height="101.7" fill="#555555" />
<rect x="860.4" y="870.6" width="66.2" height="66.8" fill="#575757" stroke="#474747" stroke-width="1.400"/>
<path d="M926.6 871v66.400h-65.500" fill="none" stroke="#656565" stroke-width="1.300"/>
<rect x="859.7" y="869.9" width="30.299999999999997" height="19.3" fill="#5b5b5b" />
<svg x="862.65" y="887" width="62.400" height="36" viewBox="0 0 500 281" preserveAspectRatio="none"><rect x="0" y="0" width="500" height="281" fill="#1a1a22" /><circle cx="488" cy="27.3" r="77.4" fill="none" stroke="#fff" stroke-width="2.3"/><circle cx="488" cy="27.3" r="59.0" fill="none" stroke="#2af0e0" stroke-width="1.6"/><circle cx="488" cy="27.3" r="49.4" fill="none" stroke="#fff" stroke-width="3.4" stroke-dasharray="8.6 4"/><path d="M463.1 90.0A67.4 67.4 0 0 1 421.2 17.9" fill="none" stroke="#2af0e0" stroke-width="9.0"/><path d="M424.6 4.2A67.4 67.4 0 0 1 478.6 -39.5" fill="none" stroke="#2af0e0" stroke-width="9.0"/><circle cx="29.6" cy="266" r="75.5" fill="none" stroke="#fff" stroke-width="2.3"/><circle cx="29.6" cy="266" r="57.6" fill="none" stroke="#2af0e0" stroke-width="1.6"/><circle cx="29.6" cy="266" r="48.2" fill="none" stroke="#fff" stroke-width="3.4" stroke-dasharray="8.6 4"/><path d="M-32.2 243.5A65.8 65.8 0 0 1 32.8 200.3" fill="none" stroke="#2af0e0" stroke-width="8.8"/><path d="M51.6 204.0A65.8 65.8 0 0 1 81.5 225.5" fill="none" stroke="#2af0e0" stroke-width="8.8"/><text x="128.8" y="98.5" textLength="246" lengthAdjust="spacingAndGlyphs" font-family="Liberation Sans, sans-serif" font-weight="bold" font-size="36.5" fill="#f4f4f4" stroke="#f4f4f4" stroke-width="1.5" text-rendering="geometricPrecision">WEBSITE</text><text x="134" y="150.1" textLength="231.5" lengthAdjust="spacingAndGlyphs" font-family="Liberation Sans, sans-serif" font-weight="bold" font-size="36.5" fill="#f4f4f4" stroke="#f4f4f4" stroke-width="1.5" text-rendering="geometricPrecision">BUILDER</text><text x="141" y="201.5" textLength="217.5" lengthAdjust="spacingAndGlyphs" font-family="Liberation Sans, sans-serif" font-weight="bold" font-size="36.5" fill="#f4f4f4" stroke="#f4f4f4" stroke-width="1.5" text-rendering="geometricPrecision">INSIDER</text></svg>
<text x="867.1" y="885.3" font-size="16.5" fill="#f0f0f0" textLength="16.2" lengthAdjust="spacingAndGlyphs" font-family="Liberation Serif, serif">10</text>
<circle cx="880.8" cy="945.900" r="2.500" fill="#dedede"/><circle cx="876.1" cy="952" r="2.500" fill="#a6a6a6"/><circle cx="868.4" cy="952" r="2.500" fill="#7c7c7c"/><circle cx="871.5" cy="958.100" r="2.500" fill="#989898"/>
<path d="M901.8 957.100h1.800v1.700h-1.800z M906.9 957.100h1.800v1.700h-1.800z M911.9 957.100h1.800v1.700h-1.800z" fill="#e8e8e8"/>
<path d="M918.0 950l4.600 5.700 4.600-5.700" fill="none" stroke="#dcdcdc" stroke-width="1.100"/>
<rect x="935.6" y="863" width="80.3" height="101.7" fill="#555555" />
<rect x="942.9" y="870.6" width="66.2" height="66.8" fill="#575757" stroke="#474747" stroke-width="1.400"/>
<path d="M1009.1 871v66.400h-65.500" fill="none" stroke="#656565" stroke-width="1.300"/>
<rect x="942.1" y="869.9" width="30.299999999999997" height="19.3" fill="#5b5b5b" />
<svg x="945.10" y="887" width="62.400" height="36" viewBox="0 0 500 281" preserveAspectRatio="none"><rect x="0" y="0" width="500" height="281" fill="#1a1a22" /><circle cx="488" cy="27.3" r="77.4" fill="none" stroke="#fff" stroke-width="2.3"/><circle cx="488" cy="27.3" r="59.0" fill="none" stroke="#2af0e0" stroke-width="1.6"/><circle cx="488" cy="27.3" r="49.4" fill="none" stroke="#fff" stroke-width="3.4" stroke-dasharray="8.6 4"/><path d="M463.1 90.0A67.4 67.4 0 0 1 421.2 17.9" fill="none" stroke="#2af0e0" stroke-width="9.0"/><path d="M424.6 4.2A67.4 67.4 0 0 1 478.6 -39.5" fill="none" stroke="#2af0e0" stroke-width="9.0"/><circle cx="29.6" cy="266" r="75.5" fill="none" stroke="#fff" stroke-width="2.3"/><circle cx="29.6" cy="266" r="57.6" fill="none" stroke="#2af0e0" stroke-width="1.6"/><circle cx="29.6" cy="266" r="48.2" fill="none" stroke="#fff" stroke-width="3.4" stroke-dasharray="8.6 4"/><path d="M-32.2 243.5A65.8 65.8 0 0 1 32.8 200.3" fill="none" stroke="#2af0e0" stroke-width="8.8"/><path d="M51.6 204.0A65.8 65.8 0 0 1 81.5 225.5" fill="none" stroke="#2af0e0" stroke-width="8.8"/><text x="128.8" y="98.5" textLength="246" lengthAdjust="spacingAndGlyphs" font-family="Liberation Sans, sans-serif" font-weight="bold" font-size="36.5" fill="#f4f4f4" stroke="#f4f4f4" stroke-width="1.5" text-rendering="geometricPrecision">WEBSITE</text><text x="134" y="150.1" textLength="231.5" lengthAdjust="spacingAndGlyphs" font-family="Liberation Sans, sans-serif" font-weight="bold" font-size="36.5" fill="#f4f4f4" stroke="#f4f4f4" stroke-width="1.5" text-rendering="geometricPrecision">BUILDER</text><text x="141" y="201.5" textLength="217.5" lengthAdjust="spacingAndGlyphs" font-family="Liberation Sans, sans-serif" font-weight="bold" font-size="36.5" fill="#f4f4f4" stroke="#f4f4f4" stroke-width="1.5" text-rendering="geometricPrecision">INSIDER</text></svg>
<text x="949.5" y="885.3" font-size="16.5" fill="#f0f0f0" textLength="16.2" lengthAdjust="spacingAndGlyphs" font-family="Liberation Serif, serif">11</text>
<circle cx="963.2" cy="945.900" r="2.500" fill="#dedede"/><circle cx="958.5" cy="952" r="2.500" fill="#a6a6a6"/><circle cx="950.9" cy="952" r="2.500" fill="#7c7c7c"/><circle cx="954.0" cy="958.100" r="2.500" fill="#989898"/>
<path d="M984.2 957.100h1.800v1.700h-1.800z M989.3 957.100h1.800v1.700h-1.800z M994.3 957.100h1.800v1.700h-1.800z" fill="#e8e8e8"/>
<path d="M1000.4 950l4.600 5.700 4.600-5.700" fill="none" stroke="#dcdcdc" stroke-width="1.100"/>
<rect x="1018.1" y="863" width="80.3" height="101.7" fill="#555555" />
<rect x="1025.3" y="870.6" width="66.2" height="66.8" fill="#575757" stroke="#474747" stroke-width="1.400"/>
<path d="M1091.5 871v66.400h-65.500" fill="none" stroke="#656565" stroke-width="1.300"/>
<rect x="1024.6" y="869.9" width="30.299999999999997" height="19.3" fill="#5b5b5b" />
<svg x="1027.55" y="887" width="62.400" height="36" viewBox="0 0 500 281" preserveAspectRatio="none"><rect x="0" y="0" width="500" height="281" fill="#1a1a22" /><circle cx="488" cy="27.3" r="77.4" fill="none" stroke="#fff" stroke-width="2.3"/><circle cx="488" cy="27.3" r="59.0" fill="none" stroke="#2af0e0" stroke-width="1.6"/><circle cx="488" cy="27.3" r="49.4" fill="none" stroke="#fff" stroke-width="3.4" stroke-dasharray="8.6 4"/><path d="M463.1 90.0A67.4 67.4 0 0 1 421.2 17.9" fill="none" stroke="#2af0e0" stroke-width="9.0"/><path d="M424.6 4.2A67.4 67.4 0 0 1 478.6 -39.5" fill="none" stroke="#2af0e0" stroke-width="9.0"/><circle cx="29.6" cy="266" r="75.5" fill="none" stroke="#fff" stroke-width="2.3"/><circle cx="29.6" cy="266" r="57.6" fill="none" stroke="#2af0e0" stroke-width="1.6"/><circle cx="29.6" cy="266" r="48.2" fill="none" stroke="#fff" stroke-width="3.4" stroke-dasharray="8.6 4"/><path d="M-32.2 243.5A65.8 65.8 0 0 1 32.8 200.3" fill="none" stroke="#2af0e0" stroke-width="8.8"/><path d="M51.6 204.0A65.8 65.8 0 0 1 81.5 225.5" fill="none" stroke="#2af0e0" stroke-width="8.8"/><text x="128.8" y="98.5" textLength="246" lengthAdjust="spacingAndGlyphs" font-family="Liberation Sans, sans-serif" font-weight="bold" font-size="36.5" fill="#f4f4f4" stroke="#f4f4f4" stroke-width="1.5" text-rendering="geometricPrecision">WEBSITE</text><text x="134" y="150.1" textLength="231.5" lengthAdjust="spacingAndGlyphs" font-family="Liberation Sans, sans-serif" font-weight="bold" font-size="36.5" fill="#f4f4f4" stroke="#f4f4f4" stroke-width="1.5" text-rendering="geometricPrecision">BUILDER</text><text x="141" y="201.5" textLength="217.5" lengthAdjust="spacingAndGlyphs" font-family="Liberation Sans, sans-serif" font-weight="bold" font-size="36.5" fill="#f4f4f4" stroke="#f4f4f4" stroke-width="1.5" text-rendering="geometricPrecision">INSIDER</text></svg>
<text x="1032.0" y="885.3" font-size="16.5" fill="#f0f0f0" textLength="16.2" lengthAdjust="spacingAndGlyphs" font-family="Liberation Serif, serif">12</text>
<circle cx="1045.7" cy="945.900" r="2.500" fill="#dedede"/><circle cx="1041.0" cy="952" r="2.500" fill="#a6a6a6"/><circle cx="1033.3" cy="952" r="2.500" fill="#7c7c7c"/><circle cx="1036.4" cy="958.100" r="2.500" fill="#989898"/>
<path d="M1066.7 957.100h1.800v1.700h-1.800z M1071.8 957.100h1.800v1.700h-1.800z M1076.8 957.100h1.800v1.700h-1.800z" fill="#e8e8e8"/>
<path d="M1082.9 950l4.600 5.700 4.600-5.700" fill="none" stroke="#dcdcdc" stroke-width="1.100"/>
<rect x="1100.6" y="863" width="80.3" height="101.7" fill="#555555" />
<rect x="1107.8" y="870.6" width="66.2" height="66.8" fill="#575757" stroke="#474747" stroke-width="1.400"/>
<path d="M1174.0 871v66.400h-65.500" fill="none" stroke="#656565" stroke-width="1.300"/>
<rect x="1107.1" y="869.9" width="30.299999999999997" height="19.3" fill="#5b5b5b" />
<svg x="1110.00" y="887" width="62.400" height="36" viewBox="0 0 500 281" preserveAspectRatio="none"><rect x="0" y="0" width="500" height="281" fill="#1a1a22" /><circle cx="488" cy="27.3" r="77.4" fill="none" stroke="#fff" stroke-width="2.3"/><circle cx="488" cy="27.3" r="59.0" fill="none" stroke="#2af0e0" stroke-width="1.6"/><circle cx="488" cy="27.3" r="49.4" fill="none" stroke="#fff" stroke-width="3.4" stroke-dasharray="8.6 4"/><path d="M463.1 90.0A67.4 67.4 0 0 1 421.2 17.9" fill="none" stroke="#2af0e0" stroke-width="9.0"/><path d="M424.6 4.2A67.4 67.4 0 0 1 478.6 -39.5" fill="none" stroke="#2af0e0" stroke-width="9.0"/><circle cx="29.6" cy="266" r="75.5" fill="none" stroke="#fff" stroke-width="2.3"/><circle cx="29.6" cy="266" r="57.6" fill="none" stroke="#2af0e0" stroke-width="1.6"/><circle cx="29.6" cy="266" r="48.2" fill="none" stroke="#fff" stroke-width="3.4" stroke-dasharray="8.6 4"/><path d="M-32.2 243.5A65.8 65.8 0 0 1 32.8 200.3" fill="none" stroke="#2af0e0" stroke-width="8.8"/><path d="M51.6 204.0A65.8 65.8 0 0 1 81.5 225.5" fill="none" stroke="#2af0e0" stroke-width="8.8"/><text x="128.8" y="98.5" textLength="246" lengthAdjust="spacingAndGlyphs" font-family="Liberation Sans, sans-serif" font-weight="bold" font-size="36.5" fill="#f4f4f4" stroke="#f4f4f4" stroke-width="1.5" text-rendering="geometricPrecision">WEBSITE</text><text x="134" y="150.1" textLength="231.5" lengthAdjust="spacingAndGlyphs" font-family="Liberation Sans, sans-serif" font-weight="bold" font-size="36.5" fill="#f4f4f4" stroke="#f4f4f4" stroke-width="1.5" text-rendering="geometricPrecision">BUILDER</text><text x="141" y="201.5" textLength="217.5" lengthAdjust="spacingAndGlyphs" font-family="Liberation Sans, sans-serif" font-weight="bold" font-size="36.5" fill="#f4f4f4" stroke="#f4f4f4" stroke-width="1.5" text-rendering="geometricPrecision">INSIDER</text></svg>
<text x="1114.5" y="885.3" font-size="16.5" fill="#f0f0f0" textLength="16.2" lengthAdjust="spacingAndGlyphs" font-family="Liberation Serif, serif">13</text>
<circle cx="1128.2" cy="945.900" r="2.500" fill="#dedede"/><circle cx="1123.5" cy="952" r="2.500" fill="#a6a6a6"/><circle cx="1115.8" cy="952" r="2.500" fill="#7c7c7c"/><circle cx="1118.9" cy="958.100" r="2.500" fill="#989898"/>
<path d="M1149.2 957.100h1.800v1.700h-1.800z M1154.3 957.100h1.800v1.700h-1.800z M1159.3 957.100h1.800v1.700h-1.800z" fill="#e8e8e8"/>
<path d="M1165.4 950l4.600 5.700 4.600-5.700" fill="none" stroke="#dcdcdc" stroke-width="1.100"/>
<rect x="1183.0" y="863" width="80.3" height="101.7" fill="#555555" />
<rect x="1190.2" y="870.6" width="66.2" height="66.8" fill="#575757" stroke="#474747" stroke-width="1.400"/>
<path d="M1256.4 871v66.400h-65.500" fill="none" stroke="#656565" stroke-width="1.300"/>
<rect x="1189.5" y="869.9" width="30.299999999999997" height="19.3" fill="#5b5b5b" />
<svg x="1192.45" y="887" width="62.400" height="36" viewBox="0 0 500 281" preserveAspectRatio="none"><rect x="0" y="0" width="500" height="281" fill="#1a1a22" /><circle cx="488" cy="27.3" r="77.4" fill="none" stroke="#fff" stroke-width="2.3"/><circle cx="488" cy="27.3" r="59.0" fill="none" stroke="#2af0e0" stroke-width="1.6"/><circle cx="488" cy="27.3" r="49.4" fill="none" stroke="#fff" stroke-width="3.4" stroke-dasharray="8.6 4"/><path d="M463.1 90.0A67.4 67.4 0 0 1 421.2 17.9" fill="none" stroke="#2af0e0" stroke-width="9.0"/><path d="M424.6 4.2A67.4 67.4 0 0 1 478.6 -39.5" fill="none" stroke="#2af0e0" stroke-width="9.0"/><circle cx="29.6" cy="266" r="75.5" fill="none" stroke="#fff" stroke-width="2.3"/><circle cx="29.6" cy="266" r="57.6" fill="none" stroke="#2af0e0" stroke-width="1.6"/><circle cx="29.6" cy="266" r="48.2" fill="none" stroke="#fff" stroke-width="3.4" stroke-dasharray="8.6 4"/><path d="M-32.2 243.5A65.8 65.8 0 0 1 32.8 200.3" fill="none" stroke="#2af0e0" stroke-width="8.8"/><path d="M51.6 204.0A65.8 65.8 0 0 1 81.5 225.5" fill="none" stroke="#2af0e0" stroke-width="8.8"/><text x="128.8" y="98.5" textLength="246" lengthAdjust="spacingAndGlyphs" font-family="Liberation Sans, sans-serif" font-weight="bold" font-size="36.5" fill="#f4f4f4" stroke="#f4f4f4" stroke-width="1.5" text-rendering="geometricPrecision">WEBSITE</text><text x="134" y="150.1" textLength="231.5" lengthAdjust="spacingAndGlyphs" font-family="Liberation Sans, sans-serif" font-weight="bold" font-size="36.5" fill="#f4f4f4" stroke="#f4f4f4" stroke-width="1.5" text-rendering="geometricPrecision">BUILDER</text><text x="141" y="201.5" textLength="217.5" lengthAdjust="spacingAndGlyphs" font-family="Liberation Sans, sans-serif" font-weight="bold" font-size="36.5" fill="#f4f4f4" stroke="#f4f4f4" stroke-width="1.5" text-rendering="geometricPrecision">INSIDER</text></svg>
<text x="1196.9" y="885.3" font-size="16.5" fill="#f0f0f0" textLength="16.2" lengthAdjust="spacingAndGlyphs" font-family="Liberation Serif, serif">14</text>
<circle cx="1210.6" cy="945.900" r="2.500" fill="#dedede"/><circle cx="1205.9" cy="952" r="2.500" fill="#a6a6a6"/><circle cx="1198.2" cy="952" r="2.500" fill="#7c7c7c"/><circle cx="1201.3" cy="958.100" r="2.500" fill="#989898"/>
<path d="M1231.6 957.100h1.800v1.700h-1.800z M1236.7 957.100h1.800v1.700h-1.800z M1241.7 957.100h1.800v1.700h-1.800z" fill="#e8e8e8"/>
<path d="M1247.8 950l4.600 5.700 4.600-5.700" fill="none" stroke="#dcdcdc" stroke-width="1.100"/>
<rect x="1265.5" y="863" width="80.3" height="101.7" fill="#555555" />
<rect x="1272.7" y="870.6" width="66.2" height="66.8" fill="#575757" stroke="#474747" stroke-width="1.400"/>
<path d="M1338.9 871v66.400h-65.500" fill="none" stroke="#656565" stroke-width="1.300"/>
<rect x="1272.0" y="869.9" width="30.299999999999997" height="19.3" fill="#5b5b5b" />
<svg x="1274.90" y="887" width="62.400" height="36" viewBox="0 0 500 281" preserveAspectRatio="none"><rect x="0" y="0" width="500" height="281" fill="#1a1a22" /><circle cx="488" cy="27.3" r="77.4" fill="none" stroke="#fff" stroke-width="2.3"/><circle cx="488" cy="27.3" r="59.0" fill="none" stroke="#2af0e0" stroke-width="1.6"/><circle cx="488" cy="27.3" r="49.4" fill="none" stroke="#fff" stroke-width="3.4" stroke-dasharray="8.6 4"/><path d="M463.1 90.0A67.4 67.4 0 0 1 421.2 17.9" fill="none" stroke="#2af0e0" stroke-width="9.0"/><path d="M424.6 4.2A67.4 67.4 0 0 1 478.6 -39.5" fill="none" stroke="#2af0e0" stroke-width="9.0"/><circle cx="29.6" cy="266" r="75.5" fill="none" stroke="#fff" stroke-width="2.3"/><circle cx="29.6" cy="266" r="57.6" fill="none" stroke="#2af0e0" stroke-width="1.6"/><circle cx="29.6" cy="266" r="48.2" fill="none" stroke="#fff" stroke-width="3.4" stroke-dasharray="8.6 4"/><path d="M-32.2 243.5A65.8 65.8 0 0 1 32.8 200.3" fill="none" stroke="#2af0e0" stroke-width="8.8"/><path d="M51.6 204.0A65.8 65.8 0 0 1 81.5 225.5" fill="none" stroke="#2af0e0" stroke-width="8.8"/><text x="128.8" y="98.5" textLength="246" lengthAdjust="spacingAndGlyphs" font-family="Liberation Sans, sans-serif" font-weight="bold" font-size="36.5" fill="#f4f4f4" stroke="#f4f4f4" stroke-width="1.5" text-rendering="geometricPrecision">WEBSITE</text><text x="134" y="150.1" textLength="231.5" lengthAdjust="spacingAndGlyphs" font-family="Liberation Sans, sans-serif" font-weight="bold" font-size="36.5" fill="#f4f4f4" stroke="#f4f4f4" stroke-width="1.5" text-rendering="geometricPrecision">BUILDER</text><text x="141" y="201.5" textLength="217.5" lengthAdjust="spacingAndGlyphs" font-family="Liberation Sans, sans-serif" font-weight="bold" font-size="36.5" fill="#f4f4f4" stroke="#f4f4f4" stroke-width="1.5" text-rendering="geometricPrecision">INSIDER</text></svg>
<text x="1279.4" y="885.3" font-size="16.5" fill="#f0f0f0" textLength="16.2" lengthAdjust="spacingAndGlyphs" font-family="Liberation Serif, serif">15</text>
<circle cx="1293.0" cy="945.900" r="2.500" fill="#dedede"/><circle cx="1288.3" cy="952" r="2.500" fill="#a6a6a6"/><circle cx="1280.6" cy="952" r="2.500" fill="#7c7c7c"/><circle cx="1283.8" cy="958.100" r="2.500" fill="#989898"/>
<path d="M1314.1 957.100h1.800v1.700h-1.800z M1319.2 957.100h1.800v1.700h-1.800z M1324.2 957.100h1.800v1.700h-1.800z" fill="#e8e8e8"/>
<path d="M1330.2 950l4.600 5.700 4.600-5.700" fill="none" stroke="#dcdcdc" stroke-width="1.100"/>
<rect x="1347.9" y="863" width="80.3" height="101.7" fill="#555555" />
<rect x="1355.1" y="870.6" width="66.2" height="66.8" fill="#575757" stroke="#474747" stroke-width="1.400"/>
<path d="M1421.3 871v66.400h-65.500" fill="none" stroke="#656565" stroke-width="1.300"/>
<rect x="1354.4" y="869.9" width="30.299999999999997" height="19.3" fill="#5b5b5b" />
<svg x="1357.35" y="887" width="62.400" height="36" viewBox="0 0 500 281" preserveAspectRatio="none"><rect x="0" y="0" width="500" height="281" fill="#1a1a22" /><circle cx="488" cy="27.3" r="77.4" fill="none" stroke="#fff" stroke-width="2.3"/><circle cx="488" cy="27.3" r="59.0" fill="none" stroke="#2af0e0" stroke-width="1.6"/><circle cx="488" cy="27.3" r="49.4" fill="none" stroke="#fff" stroke-width="3.4" stroke-dasharray="8.6 4"/><path d="M463.1 90.0A67.4 67.4 0 0 1 421.2 17.9" fill="none" stroke="#2af0e0" stroke-width="9.0"/><path d="M424.6 4.2A67.4 67.4 0 0 1 478.6 -39.5" fill="none" stroke="#2af0e0" stroke-width="9.0"/><circle cx="29.6" cy="266" r="75.5" fill="none" stroke="#fff" stroke-width="2.3"/><circle cx="29.6" cy="266" r="57.6" fill="none" stroke="#2af0e0" stroke-width="1.6"/><circle cx="29.6" cy="266" r="48.2" fill="none" stroke="#fff" stroke-width="3.4" stroke-dasharray="8.6 4"/><path d="M-32.2 243.5A65.8 65.8 0 0 1 32.8 200.3" fill="none" stroke="#2af0e0" stroke-width="8.8"/><path d="M51.6 204.0A65.8 65.8 0 0 1 81.5 225.5" fill="none" stroke="#2af0e0" stroke-width="8.8"/><text x="128.8" y="98.5" textLength="246" lengthAdjust="spacingAndGlyphs" font-family="Liberation Sans, sans-serif" font-weight="bold" font-size="36.5" fill="#f4f4f4" stroke="#f4f4f4" stroke-width="1.5" text-rendering="geometricPrecision">WEBSITE</text><text x="134" y="150.1" textLength="231.5" lengthAdjust="spacingAndGlyphs" font-family="Liberation Sans, sans-serif" font-weight="bold" font-size="36.5" fill="#f4f4f4" stroke="#f4f4f4" stroke-width="1.5" text-rendering="geometricPrecision">BUILDER</text><text x="141" y="201.5" textLength="217.5" lengthAdjust="spacingAndGlyphs" font-family="Liberation Sans, sans-serif" font-weight="bold" font-size="36.5" fill="#f4f4f4" stroke="#f4f4f4" stroke-width="1.5" text-rendering="geometricPrecision">INSIDER</text></svg>
<text x="1361.8" y="885.3" font-size="16.5" fill="#f0f0f0" textLength="16.2" lengthAdjust="spacingAndGlyphs" font-family="Liberation Serif, serif">16</text>
<circle cx="1375.5" cy="945.900" r="2.500" fill="#dedede"/><circle cx="1370.8" cy="952" r="2.500" fill="#a6a6a6"/><circle cx="1363.1" cy="952" r="2.500" fill="#7c7c7c"/><circle cx="1366.2" cy="958.100" r="2.500" fill="#989898"/>
<path d="M1396.5 957.100h1.800v1.700h-1.800z M1401.6 957.100h1.800v1.700h-1.800z M1406.6 957.100h1.800v1.700h-1.800z" fill="#e8e8e8"/>
<path d="M1412.7 950l4.600 5.700 4.600-5.700" fill="none" stroke="#dcdcdc" stroke-width="1.100"/>
<rect x="1430.4" y="863" width="80.3" height="101.7" fill="#555555" />
<rect x="1437.6" y="870.6" width="66.2" height="66.8" fill="#575757" stroke="#474747" stroke-width="1.400"/>
<path d="M1503.8 871v66.400h-65.500" fill="none" stroke="#656565" stroke-width="1.300"/>
<rect x="1436.9" y="869.9" width="30.299999999999997" height="19.3" fill="#5b5b5b" />
<svg x="1439.80" y="887" width="62.400" height="36" viewBox="0 0 500 281" preserveAspectRatio="none"><rect x="0" y="0" width="500" height="281" fill="#1a1a22" /><circle cx="488" cy="27.3" r="77.4" fill="none" stroke="#fff" stroke-width="2.3"/><circle cx="488" cy="27.3" r="59.0" fill="none" stroke="#2af0e0" stroke-width="1.6"/><circle cx="488" cy="27.3" r="49.4" fill="none" stroke="#fff" stroke-width="3.4" stroke-dasharray="8.6 4"/><path d="M463.1 90.0A67.4 67.4 0 0 1 421.2 17.9" fill="none" stroke="#2af0e0" stroke-width="9.0"/><path d="M424.6 4.2A67.4 67.4 0 0 1 478.6 -39.5" fill="none" stroke="#2af0e0" stroke-width="9.0"/><circle cx="29.6" cy="266" r="75.5" fill="none" stroke="#fff" stroke-width="2.3"/><circle cx="29.6" cy="266" r="57.6" fill="none" stroke="#2af0e0" stroke-width="1.6"/><circle cx="29.6" cy="266" r="48.2" fill="none" stroke="#fff" stroke-width="3.4" stroke-dasharray="8.6 4"/><path d="M-32.2 243.5A65.8 65.8 0 0 1 32.8 200.3" fill="none" stroke="#2af0e0" stroke-width="8.8"/><path d="M51.6 204.0A65.8 65.8 0 0 1 81.5 225.5" fill="none" stroke="#2af0e0" stroke-width="8.8"/><text x="128.8" y="98.5" textLength="246" lengthAdjust="spacingAndGlyphs" font-family="Liberation Sans, sans-serif" font-weight="bold" font-size="36.5" fill="#f4f4f4" stroke="#f4f4f4" stroke-width="1.5" text-rendering="geometricPrecision">WEBSITE</text><text x="134" y="150.1" textLength="231.5" lengthAdjust="spacingAndGlyphs" font-family="Liberation Sans, sans-serif" font-weight="bold" font-size="36.5" fill="#f4f4f4" stroke="#f4f4f4" stroke-width="1.5" text-rendering="geometricPrecision">BUILDER</text><text x="141" y="201.5" textLength="217.5" lengthAdjust="spacingAndGlyphs" font-family="Liberation Sans, sans-serif" font-weight="bold" font-size="36.5" fill="#f4f4f4" stroke="#f4f4f4" stroke-width="1.5" text-rendering="geometricPrecision">INSIDER</text></svg>
<text x="1444.3" y="885.3" font-size="16.5" fill="#f0f0f0" textLength="16.2" lengthAdjust="spacingAndGlyphs" font-family="Liberation Serif, serif">17</text>
<circle cx="1458.0" cy="945.900" r="2.500" fill="#dedede"/><circle cx="1453.2" cy="952" r="2.500" fill="#a6a6a6"/><circle cx="1445.5" cy="952" r="2.500" fill="#7c7c7c"/><circle cx="1448.7" cy="958.100" r="2.500" fill="#989898"/>
<path d="M1479.0 957.100h1.800v1.700h-1.800z M1484.1 957.100h1.800v1.700h-1.800z M1489.1 957.100h1.800v1.700h-1.800z" fill="#e8e8e8"/>
<path d="M1495.2 950l4.600 5.700 4.600-5.700" fill="none" stroke="#dcdcdc" stroke-width="1.100"/>
<rect x="1512.8" y="863" width="80.3" height="101.7" fill="#555555" />
<rect x="1520.0" y="870.6" width="66.2" height="66.8" fill="#575757" stroke="#474747" stroke-width="1.400"/>
<path d="M1586.2 871v66.400h-65.500" fill="none" stroke="#656565" stroke-width="1.300"/>
<rect x="1519.3" y="869.9" width="30.299999999999997" height="19.3" fill="#5b5b5b" />
<svg x="1522.25" y="887" width="62.400" height="36" viewBox="0 0 500 281" preserveAspectRatio="none"><rect x="0" y="0" width="500" height="281" fill="#1a1a22" /><circle cx="488" cy="27.3" r="77.4" fill="none" stroke="#fff" stroke-width="2.3"/><circle cx="488" cy="27.3" r="59.0" fill="none" stroke="#2af0e0" stroke-width="1.6"/><circle cx="488" cy="27.3" r="49.4" fill="none" stroke="#fff" stroke-width="3.4" stroke-dasharray="8.6 4"/><path d="M463.1 90.0A67.4 67.4 0 0 1 421.2 17.9" fill="none" stroke="#2af0e0" stroke-width="9.0"/><path d="M424.6 4.2A67.4 67.4 0 0 1 478.6 -39.5" fill="none" stroke="#2af0e0" stroke-width="9.0"/><circle cx="29.6" cy="266" r="75.5" fill="none" stroke="#fff" stroke-width="2.3"/><circle cx="29.6" cy="266" r="57.6" fill="none" stroke="#2af0e0" stroke-width="1.6"/><circle cx="29.6" cy="266" r="48.2" fill="none" stroke="#fff" stroke-width="3.4" stroke-dasharray="8.6 4"/><path d="M-32.2 243.5A65.8 65.8 0 0 1 32.8 200.3" fill="none" stroke="#2af0e0" stroke-width="8.8"/><path d="M51.6 204.0A65.8 65.8 0 0 1 81.5 225.5" fill="none" stroke="#2af0e0" stroke-width="8.8"/><text x="128.8" y="98.5" textLength="246" lengthAdjust="spacingAndGlyphs" font-family="Liberation Sans, sans-serif" font-weight="bold" font-size="36.5" fill="#f4f4f4" stroke="#f4f4f4" stroke-width="1.5" text-rendering="geometricPrecision">WEBSITE</text><text x="134" y="150.1" textLength="231.5" lengthAdjust="spacingAndGlyphs" font-family="Liberation Sans, sans-serif" font-weight="bold" font-size="36.5" fill="#f4f4f4" stroke="#f4f4f4" stroke-width="1.5" text-rendering="geometricPrecision">BUILDER</text><text x="141" y="201.5" textLength="217.5" lengthAdjust="spacingAndGlyphs" font-family="Liberation Sans, sans-serif" font-weight="bold" font-size="36.5" fill="#f4f4f4" stroke="#f4f4f4" stroke-width="1.5" text-rendering="geometricPrecision">INSIDER</text></svg>
<text x="1526.7" y="885.3" font-size="16.5" fill="#f0f0f0" textLength="16.2" lengthAdjust="spacingAndGlyphs" font-family="Liberation Serif, serif">18</text>
<circle cx="1540.4" cy="945.900" r="2.500" fill="#dedede"/><circle cx="1535.7" cy="952" r="2.500" fill="#a6a6a6"/><circle cx="1528.0" cy="952" r="2.500" fill="#7c7c7c"/><circle cx="1531.1" cy="958.100" r="2.500" fill="#989898"/>
<path d="M1561.4 957.100h1.800v1.700h-1.800z M1566.5 957.100h1.800v1.700h-1.800z M1571.5 957.100h1.800v1.700h-1.800z" fill="#e8e8e8"/>
<path d="M1577.6 950l4.600 5.700 4.600-5.700" fill="none" stroke="#dcdcdc" stroke-width="1.100"/>
</g>
<rect x="112" y="964.8" width="1421" height="2.2" fill="#3e3e3e" />
<rect x="112" y="967" width="1421" height="27.5" fill="#535353" />
<rect x="567.5" y="967" width="945.5" height="27.5" fill="#4a4a4a" />
<rect x="593" y="969" width="68" height="25.5" fill="#696969" rx="2"/>
<path d="M585.600 982.600l-4.500 5 4.500 5" fill="none" stroke="#8c8c8c" stroke-width="1.200"/>
<path d="M1494 982.600l4.500 5-4.500 5" fill="none" stroke="#8c8c8c" stroke-width="1.200"/>
<path d="M124.300 981.700h4.700v2.700h-4.700z M124.300 986.200h4.700v2.700h-4.700z M124.300 990.800h4.700v3.500h-4.700z M133.700 981.700h10v2.700h-10z M133.700 986.200h7.700v2.700h-7.700z M133.700 990.800h11.300v3.500h-11.300z M130.500 978h1.900v16.300h-1.900z M128.200 976.800h6.500l-2.300 2.600h-1.900z" fill="#dcdcdc"/>
<text x="171.3" y="991.6" font-size="15.5" fill="#d6d6d6" textLength="50.9" lengthAdjust="spacingAndGlyphs" >Forever</text>
<path d="M243.200 983l5.400 7.600 5.400-7.600z" fill="#d4d4d4"/>
<rect x="243" y="981.5" width="11" height="1.3" fill="#2e2e2e" />
<path d="M275.500 980.500h2.600v11h-2.600z M291.200 980.500v11l-10.800-5.500z" fill="#8a8a8a"/>
<path d="M330.400 980.500h2.600v11h-2.600z M328 980.500v11l-11-5.500z" fill="#dcdcdc"/>
<path d="M365.200 979.200v13.600l13.200-6.800z" fill="#dcdcdc"/>
<path d="M407 980.500h2.600v11h-2.600z M411.300 980.500v11l10.800-5.500z" fill="#dcdcdc"/>
<circle cx="451" cy="980.500" r="1.800" fill="#6e6e6e"/><circle cx="455.600" cy="984" r="2" fill="#858585"/><circle cx="459.600" cy="987.300" r="2.200" fill="#9a9a9a"/><circle cx="464.200" cy="990.400" r="3" fill="#d8d8d8"/>
<rect x="494.500" y="978.300" width="15" height="15" fill="none" stroke="#dcdcdc" stroke-width="1.400"/><path d="M502 982v7.600M498.200 985.800h7.600" stroke="#dcdcdc" stroke-width="1.500"/>
<path d="M538 980h14.500M542.500 979.800v-2h5.500v2 M539.800 981.500v12.500M550.700 981.500v12.500 M543 983v11M545.200 983v11M547.500 983v11" fill="none" stroke="#dcdcdc" stroke-width="1.300"/>
<rect x="1513" y="967" width="20" height="27.5" fill="#535353" />
</g>
<rect x="107" y="789" width="1430" height="210" fill="none" stroke="#e20404" stroke-width="10" stroke-linejoin="round"/>
</svg>
</body>
</html>
